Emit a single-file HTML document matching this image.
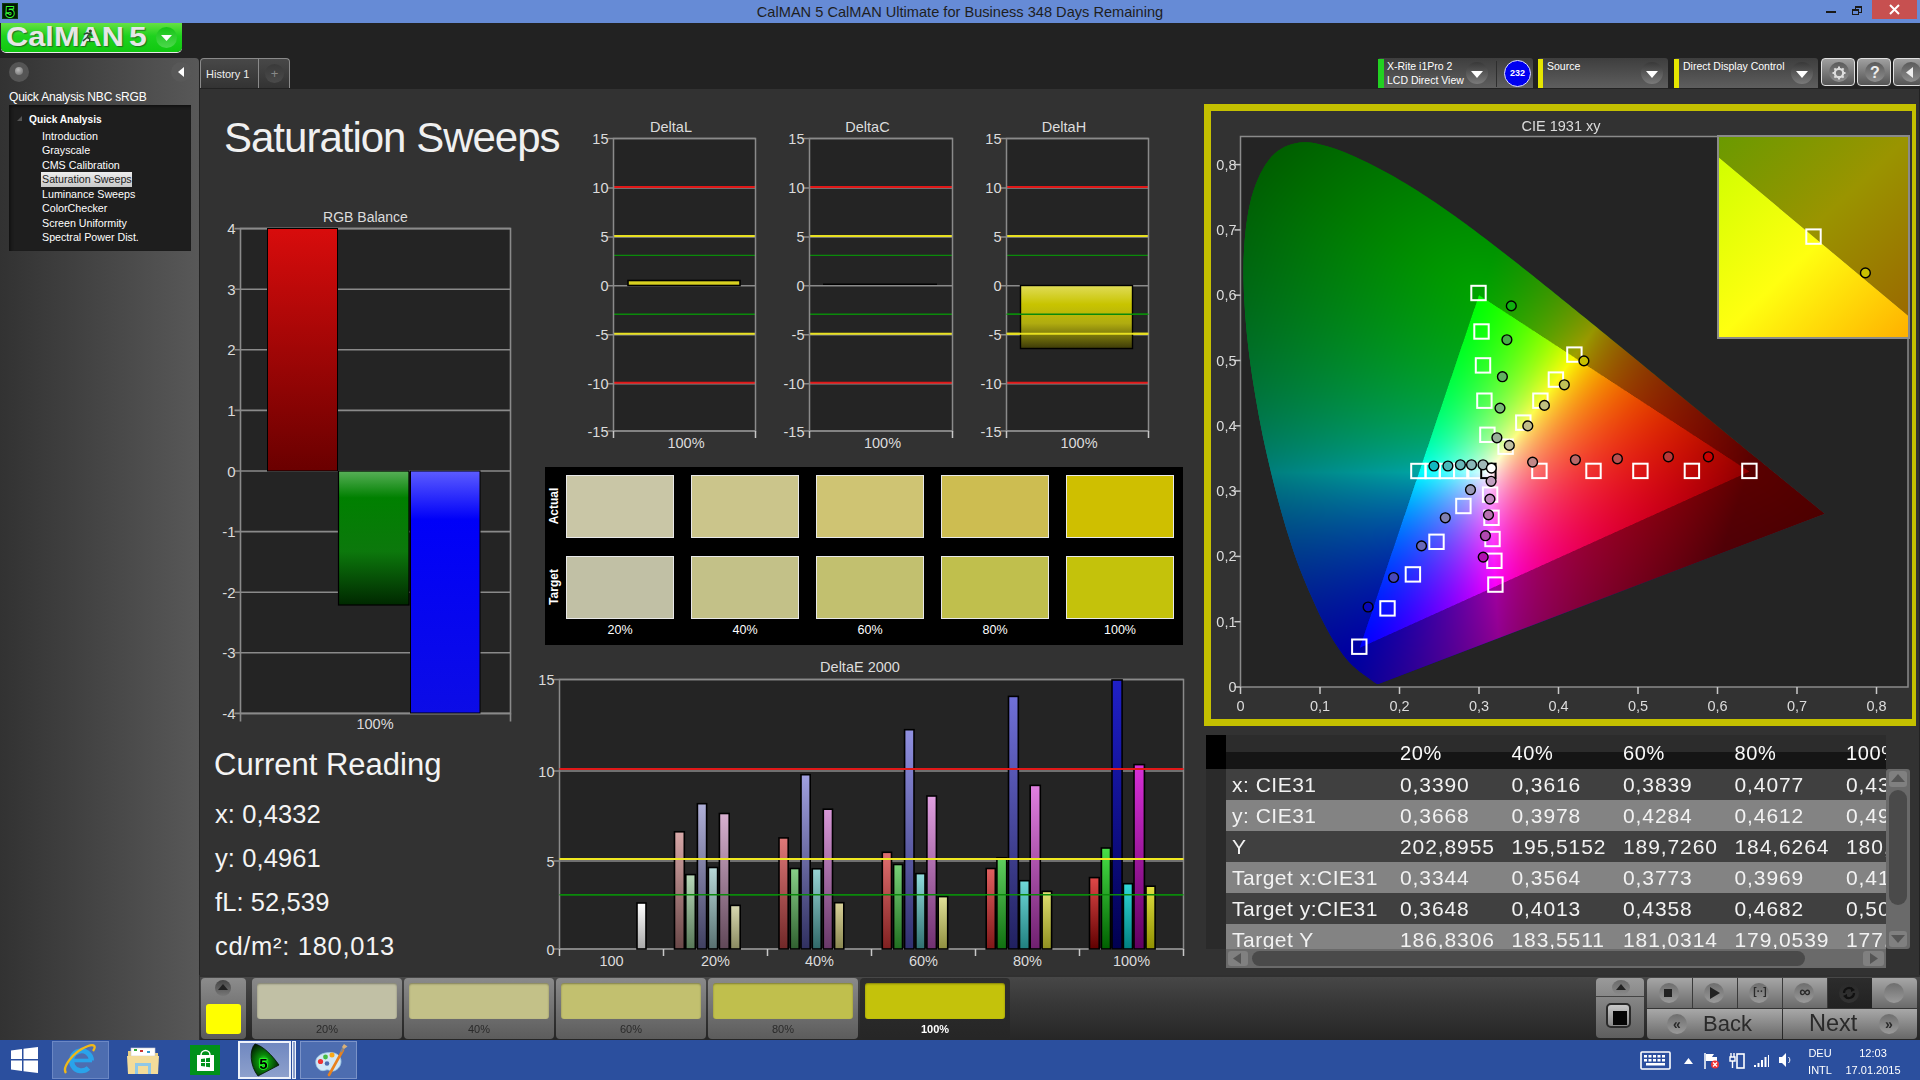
<!DOCTYPE html><html><head><meta charset="utf-8"><style>html,body{margin:0;padding:0;width:1920px;height:1080px;overflow:hidden;background:#222;font-family:"Liberation Sans",sans-serif}div{box-sizing:border-box}</style></head><body>
<div style="position:absolute;left:0;top:0;width:1920px;height:23px;background:#668bd6"></div>
<svg style="position:absolute;left:2px;top:3px" width="16" height="16" viewBox="0 0 16 16"><rect width="16" height="16" fill="#0b3a0b"/><rect x="1" y="1" width="14" height="14" fill="#041804"/><text x="8" y="14" font-family="Liberation Sans" font-weight="bold" font-size="15" fill="#000" stroke="#3f3" stroke-width="1.8" paint-order="stroke" text-anchor="middle">5</text></svg>
<div style="position:absolute;left:0;top:3px;width:1920px;text-align:center;font:14.6px 'Liberation Sans', sans-serif;color:#1e1e1e;line-height:18px">CalMAN 5 CalMAN Ultimate for Business 348 Days Remaining</div>
<div style="position:absolute;left:1826px;top:11px;width:10px;height:2px;background:#1a1a1a"></div>
<div style="position:absolute;left:1855px;top:6px;width:7px;height:7px;border:1px solid #1a1a1a;border-top-width:2px"></div>
<div style="position:absolute;left:1852px;top:9px;width:7px;height:6px;border:1px solid #1a1a1a;border-top-width:2px;background:#668bd6"></div>
<div style="position:absolute;left:1872px;top:0;width:45px;height:19px;background:#c75050"></div>
<svg style="position:absolute;left:1889px;top:4px" width="11" height="11"><path d="M1 1L10 10M10 1L1 10" stroke="#fff" stroke-width="2"/></svg>
<div style="position:absolute;left:0;top:23px;width:1920px;height:66px;background:#222222"></div>
<div style="position:absolute;left:1px;top:23px;width:181px;height:29px;border-radius:0 0 5px 5px;background:linear-gradient(#66e044,#1ed21e 45%,#10c810);box-shadow:0 1px 0 #e8e8e8"></div>
<div style="position:absolute;left:5.5px;top:19px;font:bold 28.5px 'Liberation Sans', sans-serif;color:#e6e6e6;transform:scaleX(1.08);transform-origin:0 0;text-shadow:1px 1px 1px #207020;line-height:34px;white-space:nowrap">CalMAN</div>
<div style="position:absolute;left:128.5px;top:19px;font:bold 28.5px 'Liberation Sans', sans-serif;color:#e6e6e6;transform:scaleX(1.12);transform-origin:0 0;text-shadow:1px 1px 1px #207020;line-height:34px">5</div>
<svg style="position:absolute;left:80.5px;top:28.5px" width="13" height="13" viewBox="0 0 14 14"><circle cx="10" cy="2.2" r="1.7" fill="#2e4a2e"/><path d="M3.5 5.5L6.5 4.3L9 5L11.5 7.2M8.8 4.8L6.5 9.2L2.5 12.5M6.5 9.2L9.5 10.5L9.2 13.5" stroke="#2e4a2e" stroke-width="1.6" fill="none" stroke-linecap="round" stroke-linejoin="round"/></svg>
<div style="position:absolute;left:156px;top:27px;width:21px;height:21px;border-radius:50%;background:linear-gradient(#16c416,#4cd84c)"></div>
<svg style="position:absolute;left:160px;top:34px" width="13" height="8"><path d="M1 1L12 1L6.5 7Z" fill="#fff"/></svg>
<div style="position:absolute;left:0;top:58px;width:199px;height:917px;border-radius:0 4px 0 0;background:linear-gradient(90deg,#323232,#585858)"></div>
<div style="position:absolute;left:0;top:975px;width:199px;height:65px;background:linear-gradient(90deg,#323232,#585858)"></div>
<div style="position:absolute;left:9px;top:62px;width:20px;height:20px;border-radius:50%;background:#555"></div>
<div style="position:absolute;left:15px;top:67px;width:8px;height:8px;border-radius:50%;background:radial-gradient(circle at 40% 35%,#bbb,#666)"></div>
<div style="position:absolute;left:171px;top:62px;width:20px;height:20px;border-radius:50%;background:#585858"></div>
<svg style="position:absolute;left:176px;top:66px" width="10" height="12"><path d="M8 1L8 11L2 6Z" fill="#fff"/></svg>
<div style="position:absolute;left:9px;top:89px;font:12px 'Liberation Sans', sans-serif;color:#fff;white-space:nowrap;letter-spacing:-0.2px;line-height:16px">Quick Analysis NBC sRGB</div>
<div style="position:absolute;left:9px;top:105px;width:182px;height:146px;background:#1e1e1e;box-shadow:inset 2px 2px 3px #111"></div>
<svg style="position:absolute;left:17px;top:116px" width="6" height="6"><path d="M5 0L5 5L0 5Z" fill="#555"/></svg>
<div style="position:absolute;left:29px;top:113px;font:bold 10.2px 'Liberation Sans', sans-serif;color:#fff;white-space:nowrap;line-height:14px">Quick Analysis</div>
<div style="position:absolute;left:42px;top:128.6px;font:10.7px 'Liberation Sans', sans-serif;color:#fff;white-space:nowrap;line-height:14px">Introduction</div>
<div style="position:absolute;left:42px;top:142.7px;font:10.7px 'Liberation Sans', sans-serif;color:#fff;white-space:nowrap;line-height:14px">Grayscale</div>
<div style="position:absolute;left:42px;top:157.6px;font:10.7px 'Liberation Sans', sans-serif;color:#fff;white-space:nowrap;line-height:14px">CMS Calibration</div>
<div style="position:absolute;left:41px;top:172px;width:91px;height:15px;background:linear-gradient(#eee,#c8c8c8)"></div>
<div style="position:absolute;left:42px;top:171.9px;font:10.7px 'Liberation Sans', sans-serif;color:#222;white-space:nowrap;line-height:14px">Saturation Sweeps</div>
<div style="position:absolute;left:42px;top:186.8px;font:10.7px 'Liberation Sans', sans-serif;color:#fff;white-space:nowrap;line-height:14px">Luminance Sweeps</div>
<div style="position:absolute;left:42px;top:201.3px;font:10.7px 'Liberation Sans', sans-serif;color:#fff;white-space:nowrap;line-height:14px">ColorChecker</div>
<div style="position:absolute;left:42px;top:215.5px;font:10.7px 'Liberation Sans', sans-serif;color:#fff;white-space:nowrap;line-height:14px">Screen Uniformity</div>
<div style="position:absolute;left:42px;top:230.4px;font:10.7px 'Liberation Sans', sans-serif;color:#fff;white-space:nowrap;line-height:14px">Spectral Power Dist.</div>
<div style="position:absolute;left:200px;top:58px;width:90px;height:30px;border:1px solid #8a8a8a;border-bottom:none;border-radius:4px 4px 0 0;background:linear-gradient(#484848,#333)"></div>
<div style="position:absolute;left:258px;top:59px;width:1px;height:29px;background:#8a8a8a"></div>
<div style="position:absolute;left:206px;top:66px;font:11px 'Liberation Sans', sans-serif;color:#eee;white-space:nowrap;line-height:16px">History 1</div>
<div style="position:absolute;left:265px;top:64px;width:19px;height:19px;border-radius:50%;background:linear-gradient(#3a3a3a,#4a4a4a)"></div>
<div style="position:absolute;left:265px;top:64px;width:19px;text-align:center;font:13px 'Liberation Sans', sans-serif;color:#888;line-height:20px">+</div>
<div style="position:absolute;left:200px;top:89px;width:1719px;height:886px;background:#323232"></div>
<div style="position:absolute;left:1378px;top:58px;width:155px;height:30px;border-radius:3px 3px 0 0;background:linear-gradient(#3e3e3e,#5e5e5e)"></div>
<div style="position:absolute;left:1378px;top:59px;width:6px;height:29px;background:#22d022"></div>
<div style="position:absolute;left:1387px;top:59px;font:10.5px 'Liberation Sans', sans-serif;color:#fff;line-height:14px;white-space:nowrap">X-Rite i1Pro 2<br>LCD Direct View</div>
<div style="position:absolute;left:1466px;top:62px;width:22px;height:22px;border-radius:50%;background:linear-gradient(#383838,#7a7a7a)"></div><svg style="position:absolute;left:1471px;top:71px" width="12" height="7"><path d="M0 0L12 0L6 7Z" fill="#fff"/></svg>
<div style="position:absolute;left:1496px;top:61px;width:1px;height:26px;background:#2e2e2e"></div>
<div style="position:absolute;left:1504px;top:60px;width:27px;height:27px;border-radius:50%;background:#0000f0;border:1.5px solid #e0e0ff"></div>
<div style="position:absolute;left:1504px;top:60px;width:27px;text-align:center;font:bold 9px 'Liberation Sans', sans-serif;color:#fff;line-height:27px">232</div>
<div style="position:absolute;left:1538px;top:58px;width:130px;height:30px;border-radius:3px 3px 0 0;background:linear-gradient(#3e3e3e,#5e5e5e)"></div>
<div style="position:absolute;left:1538px;top:59px;width:5px;height:29px;background:#e6e600"></div>
<div style="position:absolute;left:1547px;top:59px;font:10.5px 'Liberation Sans', sans-serif;color:#fff;line-height:14px;white-space:nowrap">Source</div>
<div style="position:absolute;left:1641px;top:62px;width:22px;height:22px;border-radius:50%;background:linear-gradient(#383838,#7a7a7a)"></div><svg style="position:absolute;left:1646px;top:71px" width="12" height="7"><path d="M0 0L12 0L6 7Z" fill="#fff"/></svg>
<div style="position:absolute;left:1674px;top:58px;width:144px;height:30px;border-radius:3px 3px 0 0;background:linear-gradient(#3e3e3e,#5e5e5e)"></div>
<div style="position:absolute;left:1674px;top:59px;width:5px;height:29px;background:#e6e600"></div>
<div style="position:absolute;left:1683px;top:59px;font:10.5px 'Liberation Sans', sans-serif;color:#fff;line-height:14px;white-space:nowrap">Direct Display Control</div>
<div style="position:absolute;left:1791px;top:62px;width:22px;height:22px;border-radius:50%;background:linear-gradient(#383838,#7a7a7a)"></div><svg style="position:absolute;left:1796px;top:71px" width="12" height="7"><path d="M0 0L12 0L6 7Z" fill="#fff"/></svg>
<div style="position:absolute;left:1821px;top:58px;width:34px;height:28px;border:1px solid #e0e0e0;border-radius:4px;background:linear-gradient(#a0a0a0,#545454)"></div>
<div style="position:absolute;left:1829px;top:62px;width:20px;height:20px;border-radius:50%;background:linear-gradient(#5a5a5a,#8e8e8e)"></div>
<svg style="position:absolute;left:1832px;top:66px" width="14" height="14" viewBox="0 0 14 14"><circle cx="7" cy="7" r="4.2" fill="none" stroke="#ddd" stroke-width="2.2"/><g stroke="#ddd" stroke-width="2"><path d="M7 0.5V3M7 11V13.5M0.5 7H3M11 7H13.5M2.4 2.4L4 4M10 10L11.6 11.6M2.4 11.6L4 10M10 4L11.6 2.4"/></g></svg>
<div style="position:absolute;left:1857px;top:58px;width:34px;height:28px;border:1px solid #e0e0e0;border-radius:4px;background:linear-gradient(#a0a0a0,#545454)"></div>
<div style="position:absolute;left:1865px;top:62px;width:20px;height:20px;border-radius:50%;background:linear-gradient(#5a5a5a,#8e8e8e)"></div>
<div style="position:absolute;left:1865px;top:61px;width:20px;text-align:center;font:bold 16px 'Liberation Sans', sans-serif;color:#eee;line-height:24px">?</div>
<div style="position:absolute;left:1893px;top:58px;width:30px;height:28px;border:1px solid #e0e0e0;border-radius:4px;background:linear-gradient(#a0a0a0,#545454)"></div>
<div style="position:absolute;left:1901px;top:62px;width:20px;height:20px;border-radius:50%;background:linear-gradient(#5a5a5a,#8e8e8e)"></div>
<svg style="position:absolute;left:1906px;top:67px" width="8" height="11"><path d="M7 0L7 11L0 5.5Z" fill="#eee"/></svg>
<div style="position:absolute;left:224px;top:113px;font:42px 'Liberation Sans', sans-serif;letter-spacing:-1px;color:#f0f0f0;white-space:nowrap;line-height:50px">Saturation Sweeps</div>
<div style="position:absolute;left:214px;top:745px;font:31px 'Liberation Sans', sans-serif;color:#f4f4f4;white-space:nowrap;line-height:40px">Current Reading</div>
<div style="position:absolute;left:215px;top:799px;font:25.5px 'Liberation Sans', sans-serif;letter-spacing:0.1px;color:#f4f4f4;white-space:nowrap;line-height:30px">x: 0,4332</div>
<div style="position:absolute;left:215px;top:843px;font:25.5px 'Liberation Sans', sans-serif;letter-spacing:0.1px;color:#f4f4f4;white-space:nowrap;line-height:30px">y: 0,4961</div>
<div style="position:absolute;left:215px;top:887px;font:25.5px 'Liberation Sans', sans-serif;letter-spacing:0.1px;color:#f4f4f4;white-space:nowrap;line-height:30px">fL: 52,539</div>
<div style="position:absolute;left:215px;top:931px;font:25.5px 'Liberation Sans', sans-serif;letter-spacing:0.7px;color:#f4f4f4;white-space:nowrap;line-height:30px">cd/m²: 180,013</div>
<svg style="position:absolute;left:0;top:0" width="1920" height="1080" font-family="Liberation Sans">
<defs>
<linearGradient id="gR" x1="0" y1="0" x2="0" y2="1"><stop offset="0" stop-color="#d80c0c"/><stop offset="1" stop-color="#6a0000"/></linearGradient>
<linearGradient id="gG" x1="0" y1="0" x2="0" y2="1"><stop offset="0" stop-color="#58b058"/><stop offset="0.2" stop-color="#008000"/><stop offset="0.6" stop-color="#0c780c"/><stop offset="1" stop-color="#002800"/></linearGradient>
<linearGradient id="gB" x1="0" y1="0" x2="0" y2="1"><stop offset="0" stop-color="#5c5cff"/><stop offset="0.2" stop-color="#0000f8"/><stop offset="1" stop-color="#0c0ce6"/></linearGradient>
<linearGradient id="gY" x1="0" y1="0" x2="0" y2="1"><stop offset="0" stop-color="#e0dc58"/><stop offset="0.3" stop-color="#c8c400"/><stop offset="0.6" stop-color="#b0ac10"/><stop offset="1" stop-color="#3c3a08"/></linearGradient>
</defs>
<rect x="240.5" y="228.5" width="270.0" height="485.0" fill="#242424"/>
<line x1="234.5" y1="228.6" x2="510.5" y2="228.6" stroke="#8a8a8a" stroke-width="1.6"/>
<text x="235.5" y="234.1" font-size="15" fill="#dcdcdc" text-anchor="end" font-weight="normal" >4</text>
<line x1="234.5" y1="289.2" x2="510.5" y2="289.2" stroke="#8a8a8a" stroke-width="1.6"/>
<text x="235.5" y="294.7" font-size="15" fill="#dcdcdc" text-anchor="end" font-weight="normal" >3</text>
<line x1="234.5" y1="349.8" x2="510.5" y2="349.8" stroke="#8a8a8a" stroke-width="1.6"/>
<text x="235.5" y="355.3" font-size="15" fill="#dcdcdc" text-anchor="end" font-weight="normal" >2</text>
<line x1="234.5" y1="410.4" x2="510.5" y2="410.4" stroke="#8a8a8a" stroke-width="1.6"/>
<text x="235.5" y="415.9" font-size="15" fill="#dcdcdc" text-anchor="end" font-weight="normal" >1</text>
<line x1="234.5" y1="471.0" x2="510.5" y2="471.0" stroke="#8a8a8a" stroke-width="1.6"/>
<text x="235.5" y="476.5" font-size="15" fill="#dcdcdc" text-anchor="end" font-weight="normal" >0</text>
<line x1="234.5" y1="531.6" x2="510.5" y2="531.6" stroke="#8a8a8a" stroke-width="1.6"/>
<text x="235.5" y="537.1" font-size="15" fill="#dcdcdc" text-anchor="end" font-weight="normal" >-1</text>
<line x1="234.5" y1="592.2" x2="510.5" y2="592.2" stroke="#8a8a8a" stroke-width="1.6"/>
<text x="235.5" y="597.7" font-size="15" fill="#dcdcdc" text-anchor="end" font-weight="normal" >-2</text>
<line x1="234.5" y1="652.8" x2="510.5" y2="652.8" stroke="#8a8a8a" stroke-width="1.6"/>
<text x="235.5" y="658.3" font-size="15" fill="#dcdcdc" text-anchor="end" font-weight="normal" >-3</text>
<line x1="234.5" y1="713.4" x2="510.5" y2="713.4" stroke="#8a8a8a" stroke-width="1.6"/>
<text x="235.5" y="718.9" font-size="15" fill="#dcdcdc" text-anchor="end" font-weight="normal" >-4</text>
<rect x="240.5" y="228.5" width="270.0" height="485.0" fill="none" stroke="#8a8a8a" stroke-width="1.6"/>
<line x1="240.5" y1="713.5" x2="240.5" y2="721.5" stroke="#8a8a8a" stroke-width="1.6"/>
<line x1="510.5" y1="713.5" x2="510.5" y2="721.5" stroke="#8a8a8a" stroke-width="1.6"/>
<rect x="267.5" y="228.5" width="70" height="242.5" fill="url(#gR)" stroke="#000" stroke-width="1"/>
<rect x="338.5" y="471" width="70.5" height="134" fill="url(#gG)" stroke="#000" stroke-width="1.2"/>
<rect x="410.5" y="471" width="69.5" height="242" fill="url(#gB)" stroke="#000" stroke-width="1"/>
<text x="375.0" y="729.0" font-size="14.5" fill="#dcdcdc" text-anchor="middle" font-weight="normal" >100%</text>
<text x="365.5" y="221.5" font-size="14" fill="#dcdcdc" text-anchor="middle" font-weight="normal" >RGB Balance</text>
<rect x="613.5" y="138.5" width="142.0" height="292.5" fill="#242424"/>
<line x1="607.5" y1="138.5" x2="755.5" y2="138.5" stroke="#8a8a8a" stroke-width="1.5"/>
<text x="608.5" y="144.0" font-size="14.5" fill="#dcdcdc" text-anchor="end" font-weight="normal" >15</text>
<line x1="607.5" y1="187.9" x2="755.5" y2="187.9" stroke="#8a8a8a" stroke-width="1.5"/>
<text x="608.5" y="193.4" font-size="14.5" fill="#dcdcdc" text-anchor="end" font-weight="normal" >10</text>
<line x1="607.5" y1="236.9" x2="755.5" y2="236.9" stroke="#8a8a8a" stroke-width="1.5"/>
<text x="608.5" y="242.4" font-size="14.5" fill="#dcdcdc" text-anchor="end" font-weight="normal" >5</text>
<line x1="607.5" y1="285.8" x2="755.5" y2="285.8" stroke="#8a8a8a" stroke-width="1.5"/>
<text x="608.5" y="291.3" font-size="14.5" fill="#dcdcdc" text-anchor="end" font-weight="normal" >0</text>
<line x1="607.5" y1="334.8" x2="755.5" y2="334.8" stroke="#8a8a8a" stroke-width="1.5"/>
<text x="608.5" y="340.2" font-size="14.5" fill="#dcdcdc" text-anchor="end" font-weight="normal" >-5</text>
<line x1="607.5" y1="383.7" x2="755.5" y2="383.7" stroke="#8a8a8a" stroke-width="1.5"/>
<text x="608.5" y="389.2" font-size="14.5" fill="#dcdcdc" text-anchor="end" font-weight="normal" >-10</text>
<line x1="607.5" y1="431.0" x2="755.5" y2="431.0" stroke="#8a8a8a" stroke-width="1.5"/>
<text x="608.5" y="436.5" font-size="14.5" fill="#dcdcdc" text-anchor="end" font-weight="normal" >-15</text>
<line x1="613.5" y1="186.9" x2="755.5" y2="186.9" stroke="#e01818" stroke-width="2"/>
<line x1="613.5" y1="235.9" x2="755.5" y2="235.9" stroke="#e8e020" stroke-width="2"/>
<line x1="613.5" y1="255.4" x2="755.5" y2="255.4" stroke="#0a8a0a" stroke-width="1.4"/>
<line x1="613.5" y1="314.2" x2="755.5" y2="314.2" stroke="#0a8a0a" stroke-width="1.4"/>
<line x1="613.5" y1="333.8" x2="755.5" y2="333.8" stroke="#e8e020" stroke-width="2"/>
<line x1="613.5" y1="382.7" x2="755.5" y2="382.7" stroke="#e01818" stroke-width="2"/>
<rect x="613.5" y="138.5" width="142.0" height="292.5" fill="none" stroke="#8a8a8a" stroke-width="1.5"/>
<line x1="613.5" y1="431.0" x2="613.5" y2="438.0" stroke="#c8c8c8" stroke-width="1.5"/>
<line x1="755.5" y1="431.0" x2="755.5" y2="438.0" stroke="#c8c8c8" stroke-width="1.5"/>
<text x="671.0" y="132.0" font-size="14.5" fill="#dcdcdc" text-anchor="middle" font-weight="normal" >DeltaL</text>
<text x="686.0" y="448.0" font-size="14.5" fill="#dcdcdc" text-anchor="middle" font-weight="normal" >100%</text>
<rect x="809.5" y="138.5" width="143.0" height="292.5" fill="#242424"/>
<line x1="803.5" y1="138.5" x2="952.5" y2="138.5" stroke="#8a8a8a" stroke-width="1.5"/>
<text x="804.5" y="144.0" font-size="14.5" fill="#dcdcdc" text-anchor="end" font-weight="normal" >15</text>
<line x1="803.5" y1="187.9" x2="952.5" y2="187.9" stroke="#8a8a8a" stroke-width="1.5"/>
<text x="804.5" y="193.4" font-size="14.5" fill="#dcdcdc" text-anchor="end" font-weight="normal" >10</text>
<line x1="803.5" y1="236.9" x2="952.5" y2="236.9" stroke="#8a8a8a" stroke-width="1.5"/>
<text x="804.5" y="242.4" font-size="14.5" fill="#dcdcdc" text-anchor="end" font-weight="normal" >5</text>
<line x1="803.5" y1="285.8" x2="952.5" y2="285.8" stroke="#8a8a8a" stroke-width="1.5"/>
<text x="804.5" y="291.3" font-size="14.5" fill="#dcdcdc" text-anchor="end" font-weight="normal" >0</text>
<line x1="803.5" y1="334.8" x2="952.5" y2="334.8" stroke="#8a8a8a" stroke-width="1.5"/>
<text x="804.5" y="340.2" font-size="14.5" fill="#dcdcdc" text-anchor="end" font-weight="normal" >-5</text>
<line x1="803.5" y1="383.7" x2="952.5" y2="383.7" stroke="#8a8a8a" stroke-width="1.5"/>
<text x="804.5" y="389.2" font-size="14.5" fill="#dcdcdc" text-anchor="end" font-weight="normal" >-10</text>
<line x1="803.5" y1="431.0" x2="952.5" y2="431.0" stroke="#8a8a8a" stroke-width="1.5"/>
<text x="804.5" y="436.5" font-size="14.5" fill="#dcdcdc" text-anchor="end" font-weight="normal" >-15</text>
<line x1="809.5" y1="186.9" x2="952.5" y2="186.9" stroke="#e01818" stroke-width="2"/>
<line x1="809.5" y1="235.9" x2="952.5" y2="235.9" stroke="#e8e020" stroke-width="2"/>
<line x1="809.5" y1="255.4" x2="952.5" y2="255.4" stroke="#0a8a0a" stroke-width="1.4"/>
<line x1="809.5" y1="314.2" x2="952.5" y2="314.2" stroke="#0a8a0a" stroke-width="1.4"/>
<line x1="809.5" y1="333.8" x2="952.5" y2="333.8" stroke="#e8e020" stroke-width="2"/>
<line x1="809.5" y1="382.7" x2="952.5" y2="382.7" stroke="#e01818" stroke-width="2"/>
<rect x="809.5" y="138.5" width="143.0" height="292.5" fill="none" stroke="#8a8a8a" stroke-width="1.5"/>
<line x1="809.5" y1="431.0" x2="809.5" y2="438.0" stroke="#c8c8c8" stroke-width="1.5"/>
<line x1="952.5" y1="431.0" x2="952.5" y2="438.0" stroke="#c8c8c8" stroke-width="1.5"/>
<text x="867.5" y="132.0" font-size="14.5" fill="#dcdcdc" text-anchor="middle" font-weight="normal" >DeltaC</text>
<text x="882.5" y="448.0" font-size="14.5" fill="#dcdcdc" text-anchor="middle" font-weight="normal" >100%</text>
<rect x="1006.5" y="138.5" width="142.0" height="292.5" fill="#242424"/>
<line x1="1000.5" y1="138.5" x2="1148.5" y2="138.5" stroke="#8a8a8a" stroke-width="1.5"/>
<text x="1001.5" y="144.0" font-size="14.5" fill="#dcdcdc" text-anchor="end" font-weight="normal" >15</text>
<line x1="1000.5" y1="187.9" x2="1148.5" y2="187.9" stroke="#8a8a8a" stroke-width="1.5"/>
<text x="1001.5" y="193.4" font-size="14.5" fill="#dcdcdc" text-anchor="end" font-weight="normal" >10</text>
<line x1="1000.5" y1="236.9" x2="1148.5" y2="236.9" stroke="#8a8a8a" stroke-width="1.5"/>
<text x="1001.5" y="242.4" font-size="14.5" fill="#dcdcdc" text-anchor="end" font-weight="normal" >5</text>
<line x1="1000.5" y1="285.8" x2="1148.5" y2="285.8" stroke="#8a8a8a" stroke-width="1.5"/>
<text x="1001.5" y="291.3" font-size="14.5" fill="#dcdcdc" text-anchor="end" font-weight="normal" >0</text>
<line x1="1000.5" y1="334.8" x2="1148.5" y2="334.8" stroke="#8a8a8a" stroke-width="1.5"/>
<text x="1001.5" y="340.2" font-size="14.5" fill="#dcdcdc" text-anchor="end" font-weight="normal" >-5</text>
<line x1="1000.5" y1="383.7" x2="1148.5" y2="383.7" stroke="#8a8a8a" stroke-width="1.5"/>
<text x="1001.5" y="389.2" font-size="14.5" fill="#dcdcdc" text-anchor="end" font-weight="normal" >-10</text>
<line x1="1000.5" y1="431.0" x2="1148.5" y2="431.0" stroke="#8a8a8a" stroke-width="1.5"/>
<text x="1001.5" y="436.5" font-size="14.5" fill="#dcdcdc" text-anchor="end" font-weight="normal" >-15</text>
<line x1="1006.5" y1="186.9" x2="1148.5" y2="186.9" stroke="#e01818" stroke-width="2"/>
<line x1="1006.5" y1="235.9" x2="1148.5" y2="235.9" stroke="#e8e020" stroke-width="2"/>
<line x1="1006.5" y1="255.4" x2="1148.5" y2="255.4" stroke="#0a8a0a" stroke-width="1.4"/>
<line x1="1006.5" y1="314.2" x2="1148.5" y2="314.2" stroke="#0a8a0a" stroke-width="1.4"/>
<line x1="1006.5" y1="333.8" x2="1148.5" y2="333.8" stroke="#e8e020" stroke-width="2"/>
<line x1="1006.5" y1="382.7" x2="1148.5" y2="382.7" stroke="#e01818" stroke-width="2"/>
<rect x="1006.5" y="138.5" width="142.0" height="292.5" fill="none" stroke="#8a8a8a" stroke-width="1.5"/>
<line x1="1006.5" y1="431.0" x2="1006.5" y2="438.0" stroke="#c8c8c8" stroke-width="1.5"/>
<line x1="1148.5" y1="431.0" x2="1148.5" y2="438.0" stroke="#c8c8c8" stroke-width="1.5"/>
<text x="1064.0" y="132.0" font-size="14.5" fill="#dcdcdc" text-anchor="middle" font-weight="normal" >DeltaH</text>
<text x="1079.0" y="448.0" font-size="14.5" fill="#dcdcdc" text-anchor="middle" font-weight="normal" >100%</text>
<rect x="628" y="280.5" width="112" height="5" fill="#d8d020" stroke="#000" stroke-width="1.6"/>
<line x1="823" y1="284.2" x2="937" y2="284.2" stroke="#000" stroke-width="1.4"/>
<rect x="1020.5" y="285.5" width="112" height="63" fill="url(#gY)" stroke="#000" stroke-width="1.4"/>
<line x1="1006.5" y1="314.2" x2="1148.5" y2="314.2" stroke="#0a8a0a" stroke-width="1.4"/>
<line x1="1006.5" y1="333.8" x2="1148.5" y2="333.8" stroke="#e8e020" stroke-width="2"/>
</svg>
<div style="position:absolute;left:545px;top:467px;width:638px;height:178px;background:#000"></div>
<div style="position:absolute;left:566px;top:475px;width:108px;height:63px;background:#c9c6a6;border:1px solid #e8e8e8"></div>
<div style="position:absolute;left:566px;top:556px;width:108px;height:63px;background:#c1c0a5;border:1px solid #e8e8e8"></div>
<div style="position:absolute;left:566px;top:622px;width:108px;text-align:center;font:12.5px 'Liberation Sans', sans-serif;color:#fff;line-height:16px">20%</div>
<div style="position:absolute;left:691px;top:475px;width:108px;height:63px;background:#cbc58b;border:1px solid #e8e8e8"></div>
<div style="position:absolute;left:691px;top:556px;width:108px;height:63px;background:#c3c188;border:1px solid #e8e8e8"></div>
<div style="position:absolute;left:691px;top:622px;width:108px;text-align:center;font:12.5px 'Liberation Sans', sans-serif;color:#fff;line-height:16px">40%</div>
<div style="position:absolute;left:816px;top:475px;width:108px;height:63px;background:#cfc473;border:1px solid #e8e8e8"></div>
<div style="position:absolute;left:816px;top:556px;width:108px;height:63px;background:#c2c06f;border:1px solid #e8e8e8"></div>
<div style="position:absolute;left:816px;top:622px;width:108px;text-align:center;font:12.5px 'Liberation Sans', sans-serif;color:#fff;line-height:16px">60%</div>
<div style="position:absolute;left:941px;top:475px;width:108px;height:63px;background:#cdbd51;border:1px solid #e8e8e8"></div>
<div style="position:absolute;left:941px;top:556px;width:108px;height:63px;background:#c0bf4d;border:1px solid #e8e8e8"></div>
<div style="position:absolute;left:941px;top:622px;width:108px;text-align:center;font:12.5px 'Liberation Sans', sans-serif;color:#fff;line-height:16px">80%</div>
<div style="position:absolute;left:1066px;top:475px;width:108px;height:63px;background:#cfbf00;border:1px solid #e8e8e8"></div>
<div style="position:absolute;left:1066px;top:556px;width:108px;height:63px;background:#c4c20b;border:1px solid #e8e8e8"></div>
<div style="position:absolute;left:1066px;top:622px;width:108px;text-align:center;font:12.5px 'Liberation Sans', sans-serif;color:#fff;line-height:16px">100%</div>
<div style="position:absolute;left:524px;top:498px;width:60px;height:16px;transform:rotate(-90deg);text-align:center;font:bold 12px 'Liberation Sans', sans-serif;color:#fff;line-height:16px">Actual</div>
<div style="position:absolute;left:524px;top:579px;width:60px;height:16px;transform:rotate(-90deg);text-align:center;font:bold 12px 'Liberation Sans', sans-serif;color:#fff;line-height:16px">Target</div>
<svg style="position:absolute;left:0;top:0" width="1920" height="1080" font-family="Liberation Sans">
<defs><linearGradient id="de0" x1="0" y1="0" x2="0" y2="1"><stop offset="0" stop-color="#ffffff"/><stop offset="1" stop-color="#a8a8a8"/></linearGradient><linearGradient id="de1" x1="0" y1="0" x2="0" y2="1"><stop offset="0" stop-color="#d8a8a8"/><stop offset="1" stop-color="#6a4848"/></linearGradient><linearGradient id="de2" x1="0" y1="0" x2="0" y2="1"><stop offset="0" stop-color="#b8d8b8"/><stop offset="1" stop-color="#587858"/></linearGradient><linearGradient id="de3" x1="0" y1="0" x2="0" y2="1"><stop offset="0" stop-color="#b0b0d8"/><stop offset="1" stop-color="#404060"/></linearGradient><linearGradient id="de4" x1="0" y1="0" x2="0" y2="1"><stop offset="0" stop-color="#b8d8d8"/><stop offset="1" stop-color="#587070"/></linearGradient><linearGradient id="de5" x1="0" y1="0" x2="0" y2="1"><stop offset="0" stop-color="#d8b0d0"/><stop offset="1" stop-color="#604858"/></linearGradient><linearGradient id="de6" x1="0" y1="0" x2="0" y2="1"><stop offset="0" stop-color="#d8d8b0"/><stop offset="1" stop-color="#8a8a60"/></linearGradient><linearGradient id="de7" x1="0" y1="0" x2="0" y2="1"><stop offset="0" stop-color="#e07878"/><stop offset="1" stop-color="#702828"/></linearGradient><linearGradient id="de8" x1="0" y1="0" x2="0" y2="1"><stop offset="0" stop-color="#88d088"/><stop offset="1" stop-color="#306030"/></linearGradient><linearGradient id="de9" x1="0" y1="0" x2="0" y2="1"><stop offset="0" stop-color="#a0a0e0"/><stop offset="1" stop-color="#303060"/></linearGradient><linearGradient id="de10" x1="0" y1="0" x2="0" y2="1"><stop offset="0" stop-color="#98d4d4"/><stop offset="1" stop-color="#306868"/></linearGradient><linearGradient id="de11" x1="0" y1="0" x2="0" y2="1"><stop offset="0" stop-color="#d898d8"/><stop offset="1" stop-color="#683868"/></linearGradient><linearGradient id="de12" x1="0" y1="0" x2="0" y2="1"><stop offset="0" stop-color="#d8d098"/><stop offset="1" stop-color="#8a8850"/></linearGradient><linearGradient id="de13" x1="0" y1="0" x2="0" y2="1"><stop offset="0" stop-color="#e07070"/><stop offset="1" stop-color="#802020"/></linearGradient><linearGradient id="de14" x1="0" y1="0" x2="0" y2="1"><stop offset="0" stop-color="#78d078"/><stop offset="1" stop-color="#207020"/></linearGradient><linearGradient id="de15" x1="0" y1="0" x2="0" y2="1"><stop offset="0" stop-color="#9090e0"/><stop offset="1" stop-color="#303070"/></linearGradient><linearGradient id="de16" x1="0" y1="0" x2="0" y2="1"><stop offset="0" stop-color="#90dcdc"/><stop offset="1" stop-color="#307070"/></linearGradient><linearGradient id="de17" x1="0" y1="0" x2="0" y2="1"><stop offset="0" stop-color="#e0a0e0"/><stop offset="1" stop-color="#703070"/></linearGradient><linearGradient id="de18" x1="0" y1="0" x2="0" y2="1"><stop offset="0" stop-color="#e0e098"/><stop offset="1" stop-color="#909040"/></linearGradient><linearGradient id="de19" x1="0" y1="0" x2="0" y2="1"><stop offset="0" stop-color="#e06060"/><stop offset="1" stop-color="#801818"/></linearGradient><linearGradient id="de20" x1="0" y1="0" x2="0" y2="1"><stop offset="0" stop-color="#60d060"/><stop offset="1" stop-color="#107010"/></linearGradient><linearGradient id="de21" x1="0" y1="0" x2="0" y2="1"><stop offset="0" stop-color="#7070d8"/><stop offset="1" stop-color="#202060"/></linearGradient><linearGradient id="de22" x1="0" y1="0" x2="0" y2="1"><stop offset="0" stop-color="#70d8d8"/><stop offset="1" stop-color="#208080"/></linearGradient><linearGradient id="de23" x1="0" y1="0" x2="0" y2="1"><stop offset="0" stop-color="#e080e0"/><stop offset="1" stop-color="#702070"/></linearGradient><linearGradient id="de24" x1="0" y1="0" x2="0" y2="1"><stop offset="0" stop-color="#e0e070"/><stop offset="1" stop-color="#909020"/></linearGradient><linearGradient id="de25" x1="0" y1="0" x2="0" y2="1"><stop offset="0" stop-color="#e04848"/><stop offset="1" stop-color="#600000"/></linearGradient><linearGradient id="de26" x1="0" y1="0" x2="0" y2="1"><stop offset="0" stop-color="#48e048"/><stop offset="1" stop-color="#006000"/></linearGradient><linearGradient id="de27" x1="0" y1="0" x2="0" y2="1"><stop offset="0" stop-color="#2020c8"/><stop offset="1" stop-color="#000050"/></linearGradient><linearGradient id="de28" x1="0" y1="0" x2="0" y2="1"><stop offset="0" stop-color="#30d8d8"/><stop offset="1" stop-color="#008080"/></linearGradient><linearGradient id="de29" x1="0" y1="0" x2="0" y2="1"><stop offset="0" stop-color="#d830d8"/><stop offset="1" stop-color="#600060"/></linearGradient><linearGradient id="de30" x1="0" y1="0" x2="0" y2="1"><stop offset="0" stop-color="#e0e040"/><stop offset="1" stop-color="#909000"/></linearGradient></defs>
<rect x="559.5" y="679.5" width="624.0" height="269.5" fill="#242424"/>
<line x1="553.5" y1="679.5" x2="1183.5" y2="679.5" stroke="#8a8a8a" stroke-width="1.5"/>
<text x="554.5" y="685.0" font-size="14.5" fill="#dcdcdc" text-anchor="end" font-weight="normal" >15</text>
<line x1="553.5" y1="771.1" x2="1183.5" y2="771.1" stroke="#8a8a8a" stroke-width="1.5"/>
<text x="554.5" y="776.6" font-size="14.5" fill="#dcdcdc" text-anchor="end" font-weight="normal" >10</text>
<line x1="553.5" y1="861.0" x2="1183.5" y2="861.0" stroke="#8a8a8a" stroke-width="1.5"/>
<text x="554.5" y="866.5" font-size="14.5" fill="#dcdcdc" text-anchor="end" font-weight="normal" >5</text>
<line x1="553.5" y1="949.0" x2="1183.5" y2="949.0" stroke="#8a8a8a" stroke-width="1.5"/>
<text x="554.5" y="954.5" font-size="14.5" fill="#dcdcdc" text-anchor="end" font-weight="normal" >0</text>
<line x1="559.5" y1="769.0" x2="1183.5" y2="769.0" stroke="#e01818" stroke-width="2"/>
<line x1="559.5" y1="858.9" x2="1183.5" y2="858.9" stroke="#f0e820" stroke-width="2"/>
<line x1="559.5" y1="894.8" x2="1183.5" y2="894.8" stroke="#0a8a0a" stroke-width="1.5"/>
<rect x="559.5" y="679.5" width="624.0" height="269.5" fill="none" stroke="#8a8a8a" stroke-width="1.5"/>
<line x1="559.5" y1="949.0" x2="559.5" y2="956.0" stroke="#c8c8c8" stroke-width="1.5"/>
<line x1="663.5" y1="949.0" x2="663.5" y2="956.0" stroke="#c8c8c8" stroke-width="1.5"/>
<line x1="767.5" y1="949.0" x2="767.5" y2="956.0" stroke="#c8c8c8" stroke-width="1.5"/>
<line x1="871.5" y1="949.0" x2="871.5" y2="956.0" stroke="#c8c8c8" stroke-width="1.5"/>
<line x1="975.5" y1="949.0" x2="975.5" y2="956.0" stroke="#c8c8c8" stroke-width="1.5"/>
<line x1="1079.5" y1="949.0" x2="1079.5" y2="956.0" stroke="#c8c8c8" stroke-width="1.5"/>
<line x1="1183.5" y1="949.0" x2="1183.5" y2="956.0" stroke="#c8c8c8" stroke-width="1.5"/>
<text x="611.5" y="966.0" font-size="14.5" fill="#dcdcdc" text-anchor="middle" font-weight="normal" >100</text>
<text x="715.5" y="966.0" font-size="14.5" fill="#dcdcdc" text-anchor="middle" font-weight="normal" >20%</text>
<text x="819.5" y="966.0" font-size="14.5" fill="#dcdcdc" text-anchor="middle" font-weight="normal" >40%</text>
<text x="923.5" y="966.0" font-size="14.5" fill="#dcdcdc" text-anchor="middle" font-weight="normal" >60%</text>
<text x="1027.5" y="966.0" font-size="14.5" fill="#dcdcdc" text-anchor="middle" font-weight="normal" >80%</text>
<text x="1131.5" y="966.0" font-size="14.5" fill="#dcdcdc" text-anchor="middle" font-weight="normal" >100%</text>
<text x="860.0" y="672.0" font-size="14.5" fill="#dcdcdc" text-anchor="middle" font-weight="normal" >DeltaE 2000</text>
<rect x="637.0" y="903.0" width="9.0" height="46.0" fill="url(#de0)" stroke="#000" stroke-width="1.6"/>
<rect x="674.5" y="831.8" width="9.8" height="117.2" fill="url(#de1)" stroke="#000" stroke-width="1.6"/>
<rect x="685.8" y="874.6" width="9.5" height="74.4" fill="url(#de2)" stroke="#000" stroke-width="1.6"/>
<rect x="697.4" y="803.7" width="9.2" height="145.3" fill="url(#de3)" stroke="#000" stroke-width="1.6"/>
<rect x="708.4" y="867.5" width="9.2" height="81.5" fill="url(#de4)" stroke="#000" stroke-width="1.6"/>
<rect x="719.4" y="813.5" width="9.8" height="135.5" fill="url(#de5)" stroke="#000" stroke-width="1.6"/>
<rect x="730.4" y="905.4" width="9.8" height="43.6" fill="url(#de6)" stroke="#000" stroke-width="1.6"/>
<rect x="779.0" y="837.9" width="9.2" height="111.1" fill="url(#de7)" stroke="#000" stroke-width="1.6"/>
<rect x="790.3" y="868.5" width="8.9" height="80.5" fill="url(#de8)" stroke="#000" stroke-width="1.6"/>
<rect x="801.0" y="774.7" width="9.2" height="174.3" fill="url(#de9)" stroke="#000" stroke-width="1.6"/>
<rect x="812.3" y="868.8" width="8.9" height="80.2" fill="url(#de10)" stroke="#000" stroke-width="1.6"/>
<rect x="823.3" y="809.2" width="9.2" height="139.8" fill="url(#de11)" stroke="#000" stroke-width="1.6"/>
<rect x="834.6" y="902.7" width="9.2" height="46.3" fill="url(#de12)" stroke="#000" stroke-width="1.6"/>
<rect x="882.3" y="852.3" width="9.2" height="96.7" fill="url(#de13)" stroke="#000" stroke-width="1.6"/>
<rect x="893.6" y="864.5" width="8.9" height="84.5" fill="url(#de14)" stroke="#000" stroke-width="1.6"/>
<rect x="904.6" y="729.7" width="9.4" height="219.3" fill="url(#de15)" stroke="#000" stroke-width="1.6"/>
<rect x="915.9" y="873.6" width="9.1" height="75.4" fill="url(#de16)" stroke="#000" stroke-width="1.6"/>
<rect x="926.9" y="796.0" width="9.5" height="153.0" fill="url(#de17)" stroke="#000" stroke-width="1.6"/>
<rect x="938.2" y="896.6" width="9.5" height="52.4" fill="url(#de18)" stroke="#000" stroke-width="1.6"/>
<rect x="986.2" y="868.5" width="9.1" height="80.5" fill="url(#de19)" stroke="#000" stroke-width="1.6"/>
<rect x="996.9" y="857.8" width="9.8" height="91.2" fill="url(#de20)" stroke="#000" stroke-width="1.6"/>
<rect x="1008.5" y="696.4" width="9.8" height="252.6" fill="url(#de21)" stroke="#000" stroke-width="1.6"/>
<rect x="1019.5" y="880.7" width="9.8" height="68.3" fill="url(#de22)" stroke="#000" stroke-width="1.6"/>
<rect x="1030.2" y="785.4" width="10.1" height="163.6" fill="url(#de23)" stroke="#000" stroke-width="1.6"/>
<rect x="1042.1" y="891.4" width="9.5" height="57.6" fill="url(#de24)" stroke="#000" stroke-width="1.6"/>
<rect x="1089.5" y="877.6" width="9.7" height="71.4" fill="url(#de25)" stroke="#000" stroke-width="1.6"/>
<rect x="1101.4" y="848.0" width="9.1" height="101.0" fill="url(#de26)" stroke="#000" stroke-width="1.6"/>
<rect x="1112.0" y="680.0" width="10.1" height="269.0" fill="url(#de27)" stroke="#000" stroke-width="1.6"/>
<rect x="1123.4" y="883.7" width="9.1" height="65.3" fill="url(#de28)" stroke="#000" stroke-width="1.6"/>
<rect x="1134.0" y="764.6" width="10.4" height="184.4" fill="url(#de29)" stroke="#000" stroke-width="1.6"/>
<rect x="1146.0" y="886.2" width="9.1" height="62.8" fill="url(#de30)" stroke="#000" stroke-width="1.6"/>
<line x1="559.5" y1="769.0" x2="1183.5" y2="769.0" stroke="#e01818" stroke-width="2"/>
<line x1="559.5" y1="858.9" x2="1183.5" y2="858.9" stroke="#f0e820" stroke-width="2"/>
<line x1="559.5" y1="894.8" x2="1183.5" y2="894.8" stroke="#0a8a0a" stroke-width="1.5"/>
</svg>
<div style="position:absolute;left:1204px;top:104px;width:712px;height:622px;border:7px solid #c4c000;border-right-width:4px;background:#323232;box-sizing:border-box"></div>
<div style="position:absolute;left:1241px;top:137px;width:667px;height:550px;background:#242424"></div>
<svg style="position:absolute;left:0;top:0" width="1920" height="1080"><defs><linearGradient id="fbl" x1="0" y1="0" x2="0" y2="1"><stop offset="0" stop-color="#006400"/><stop offset="0.45" stop-color="#008c30"/><stop offset="0.62" stop-color="#008a8a"/><stop offset="0.8" stop-color="#00408c"/><stop offset="1" stop-color="#0000a0"/></linearGradient><linearGradient id="fbr" x1="0" y1="0" x2="1" y2="0"><stop offset="0" stop-color="#000000" stop-opacity="0"/><stop offset="0.5" stop-color="#000" stop-opacity="0"/><stop offset="1" stop-color="#600000" stop-opacity="1"/></linearGradient><radialGradient id="fbw" cx="1489.1" cy="472.2" r="90" gradientUnits="userSpaceOnUse"><stop offset="0" stop-color="#fff"/><stop offset="1" stop-color="#fff" stop-opacity="0"/></radialGradient><linearGradient id="fby" gradientUnits="userSpaceOnUse" x1="1479.0" y1="295.2" x2="1749.3" y2="471.5"><stop offset="0" stop-color="#00ff00"/><stop offset="0.5" stop-color="#ffff00"/><stop offset="1" stop-color="#b00000"/></linearGradient><linearGradient id="fbc" gradientUnits="userSpaceOnUse" x1="1479.0" y1="295.2" x2="1359.8" y2="647.8"><stop offset="0" stop-color="#00ff00"/><stop offset="0.5" stop-color="#00ffff"/><stop offset="1" stop-color="#0000ff"/></linearGradient><linearGradient id="fbm" gradientUnits="userSpaceOnUse" x1="1359.8" y1="647.8" x2="1749.3" y2="471.5"><stop offset="0" stop-color="#0000ff"/><stop offset="0.5" stop-color="#ff00ff"/><stop offset="1" stop-color="#b00000"/></linearGradient></defs><polygon points="1378.9,683.7 1378.9,683.7 1378.8,683.8 1378.7,683.8 1378.7,683.8 1378.6,683.8 1378.6,683.8 1378.6,683.8 1378.5,683.8 1378.5,683.8 1378.4,683.8 1378.3,683.9 1378.3,683.9 1378.2,683.9 1378.2,683.9 1378.1,683.9 1378.0,683.9 1378.0,683.9 1377.9,683.9 1377.8,683.9 1377.7,683.9 1377.6,683.9 1377.5,683.9 1377.4,683.9 1377.3,683.9 1377.2,683.8 1377.1,683.8 1376.9,683.7 1376.8,683.7 1376.6,683.6 1376.4,683.5 1376.1,683.4 1375.9,683.2 1375.6,683.1 1375.4,682.9 1375.1,682.7 1374.8,682.5 1374.4,682.3 1374.0,682.0 1373.6,681.7 1373.2,681.4 1372.7,681.0 1372.3,680.7 1371.7,680.3 1371.2,679.9 1370.6,679.5 1370.0,679.0 1369.3,678.5 1368.6,678.0 1367.8,677.4 1366.9,676.8 1366.0,676.1 1365.0,675.4 1364.0,674.7 1362.9,673.9 1361.8,673.1 1360.5,672.2 1359.3,671.2 1357.9,670.1 1356.5,668.9 1355.0,667.6 1353.4,666.2 1351.8,664.7 1350.1,663.0 1348.2,660.9 1346.2,658.5 1344.0,655.9 1341.7,652.8 1339.2,649.3 1336.5,645.3 1333.7,640.9 1330.8,636.0 1327.6,630.3 1324.3,623.9 1320.8,616.9 1317.0,609.1 1313.1,600.3 1308.8,590.7 1304.3,580.1 1299.7,568.6 1295.1,555.9 1290.5,542.1 1285.8,527.2 1281.2,511.2 1276.6,494.4 1272.0,476.3 1267.5,457.2 1263.1,437.4 1259.2,417.5 1255.6,397.2 1252.2,376.4 1249.3,355.6 1247.0,335.4 1245.3,315.7 1244.1,296.2 1243.5,277.3 1243.6,259.4 1244.5,242.4 1246.1,226.0 1248.5,210.8 1251.6,197.1 1255.5,184.9 1260.2,173.9 1265.6,164.5 1271.4,156.8 1277.8,150.9 1284.8,146.8 1292.1,144.1 1299.6,142.5 1307.2,142.2 1315.2,143.3 1323.2,145.2 1331.3,147.5 1339.3,150.2 1347.5,153.4 1355.6,157.1 1363.5,160.7 1371.2,164.5 1378.9,168.4 1386.4,172.4 1393.9,176.6 1401.2,180.9 1408.5,185.3 1415.8,189.8 1423.0,194.4 1430.3,199.2 1437.5,204.0 1444.6,209.0 1451.8,214.0 1459.0,219.1 1466.1,224.3 1473.2,229.6 1480.3,234.9 1487.4,240.3 1494.5,245.7 1501.6,251.2 1508.7,256.7 1515.8,262.3 1522.9,267.9 1530.0,273.5 1537.1,279.2 1544.2,284.9 1551.3,290.6 1558.4,296.3 1565.4,302.0 1572.5,307.7 1579.5,313.4 1586.6,319.1 1593.6,324.8 1600.5,330.4 1607.4,336.1 1614.3,341.7 1621.1,347.3 1627.9,352.9 1634.7,358.4 1641.3,363.8 1647.9,369.3 1654.5,374.6 1660.9,379.9 1667.3,385.1 1673.6,390.3 1679.8,395.3 1685.9,400.3 1691.9,405.2 1697.8,410.0 1703.5,414.7 1709.1,419.3 1714.6,423.8 1719.8,428.1 1724.9,432.2 1729.7,436.2 1734.4,440.0 1739.0,443.8 1743.4,447.4 1747.7,450.9 1751.9,454.3 1755.8,457.5 1759.6,460.6 1763.2,463.5 1766.6,466.3 1769.8,468.9 1772.9,471.4 1775.8,473.8 1778.6,476.1 1781.2,478.2 1783.7,480.3 1786.0,482.2 1788.2,484.0 1790.2,485.7 1792.2,487.3 1794.1,488.8 1795.8,490.2 1797.5,491.6 1799.1,492.8 1800.5,494.1 1801.9,495.2 1803.3,496.3 1804.6,497.4 1805.8,498.4 1807.0,499.4 1808.1,500.3 1809.2,501.2 1810.2,502.0 1811.2,502.8 1812.1,503.6 1813.0,504.3 1813.8,504.9 1814.6,505.5 1815.3,506.1 1816.0,506.7 1816.6,507.2 1817.1,507.6 1817.7,508.1 1818.2,508.5 1818.6,508.9 1819.1,509.2 1819.5,509.6 1819.9,509.9 1820.2,510.2 1820.6,510.4 1820.8,510.7 1821.1,510.9 1821.3,511.1 1821.5,511.2 1821.7,511.4 1821.9,511.6 1822.1,511.7 1822.3,511.9 1822.4,512.0 1822.6,512.1 1822.7,512.2 1822.9,512.3 1823.0,512.5 1823.1,512.6 1823.3,512.7 1823.4,512.8 1823.6,512.9 1823.7,513.0 1823.8,513.1 1823.9,513.2 1824.0,513.3 1824.1,513.4 1824.2,513.4 1824.3,513.5 1824.3,513.6 1824.4,513.6 1824.4,513.6 1824.5,513.7 1824.5,513.7 1824.5,513.7 1824.6,513.7 1824.6,513.7 1824.6,513.8" fill="url(#fbl)"/><polygon points="1378.9,683.7 1378.9,683.7 1378.8,683.8 1378.7,683.8 1378.7,683.8 1378.6,683.8 1378.6,683.8 1378.6,683.8 1378.5,683.8 1378.5,683.8 1378.4,683.8 1378.3,683.9 1378.3,683.9 1378.2,683.9 1378.2,683.9 1378.1,683.9 1378.0,683.9 1378.0,683.9 1377.9,683.9 1377.8,683.9 1377.7,683.9 1377.6,683.9 1377.5,683.9 1377.4,683.9 1377.3,683.9 1377.2,683.8 1377.1,683.8 1376.9,683.7 1376.8,683.7 1376.6,683.6 1376.4,683.5 1376.1,683.4 1375.9,683.2 1375.6,683.1 1375.4,682.9 1375.1,682.7 1374.8,682.5 1374.4,682.3 1374.0,682.0 1373.6,681.7 1373.2,681.4 1372.7,681.0 1372.3,680.7 1371.7,680.3 1371.2,679.9 1370.6,679.5 1370.0,679.0 1369.3,678.5 1368.6,678.0 1367.8,677.4 1366.9,676.8 1366.0,676.1 1365.0,675.4 1364.0,674.7 1362.9,673.9 1361.8,673.1 1360.5,672.2 1359.3,671.2 1357.9,670.1 1356.5,668.9 1355.0,667.6 1353.4,666.2 1351.8,664.7 1350.1,663.0 1348.2,660.9 1346.2,658.5 1344.0,655.9 1341.7,652.8 1339.2,649.3 1336.5,645.3 1333.7,640.9 1330.8,636.0 1327.6,630.3 1324.3,623.9 1320.8,616.9 1317.0,609.1 1313.1,600.3 1308.8,590.7 1304.3,580.1 1299.7,568.6 1295.1,555.9 1290.5,542.1 1285.8,527.2 1281.2,511.2 1276.6,494.4 1272.0,476.3 1267.5,457.2 1263.1,437.4 1259.2,417.5 1255.6,397.2 1252.2,376.4 1249.3,355.6 1247.0,335.4 1245.3,315.7 1244.1,296.2 1243.5,277.3 1243.6,259.4 1244.5,242.4 1246.1,226.0 1248.5,210.8 1251.6,197.1 1255.5,184.9 1260.2,173.9 1265.6,164.5 1271.4,156.8 1277.8,150.9 1284.8,146.8 1292.1,144.1 1299.6,142.5 1307.2,142.2 1315.2,143.3 1323.2,145.2 1331.3,147.5 1339.3,150.2 1347.5,153.4 1355.6,157.1 1363.5,160.7 1371.2,164.5 1378.9,168.4 1386.4,172.4 1393.9,176.6 1401.2,180.9 1408.5,185.3 1415.8,189.8 1423.0,194.4 1430.3,199.2 1437.5,204.0 1444.6,209.0 1451.8,214.0 1459.0,219.1 1466.1,224.3 1473.2,229.6 1480.3,234.9 1487.4,240.3 1494.5,245.7 1501.6,251.2 1508.7,256.7 1515.8,262.3 1522.9,267.9 1530.0,273.5 1537.1,279.2 1544.2,284.9 1551.3,290.6 1558.4,296.3 1565.4,302.0 1572.5,307.7 1579.5,313.4 1586.6,319.1 1593.6,324.8 1600.5,330.4 1607.4,336.1 1614.3,341.7 1621.1,347.3 1627.9,352.9 1634.7,358.4 1641.3,363.8 1647.9,369.3 1654.5,374.6 1660.9,379.9 1667.3,385.1 1673.6,390.3 1679.8,395.3 1685.9,400.3 1691.9,405.2 1697.8,410.0 1703.5,414.7 1709.1,419.3 1714.6,423.8 1719.8,428.1 1724.9,432.2 1729.7,436.2 1734.4,440.0 1739.0,443.8 1743.4,447.4 1747.7,450.9 1751.9,454.3 1755.8,457.5 1759.6,460.6 1763.2,463.5 1766.6,466.3 1769.8,468.9 1772.9,471.4 1775.8,473.8 1778.6,476.1 1781.2,478.2 1783.7,480.3 1786.0,482.2 1788.2,484.0 1790.2,485.7 1792.2,487.3 1794.1,488.8 1795.8,490.2 1797.5,491.6 1799.1,492.8 1800.5,494.1 1801.9,495.2 1803.3,496.3 1804.6,497.4 1805.8,498.4 1807.0,499.4 1808.1,500.3 1809.2,501.2 1810.2,502.0 1811.2,502.8 1812.1,503.6 1813.0,504.3 1813.8,504.9 1814.6,505.5 1815.3,506.1 1816.0,506.7 1816.6,507.2 1817.1,507.6 1817.7,508.1 1818.2,508.5 1818.6,508.9 1819.1,509.2 1819.5,509.6 1819.9,509.9 1820.2,510.2 1820.6,510.4 1820.8,510.7 1821.1,510.9 1821.3,511.1 1821.5,511.2 1821.7,511.4 1821.9,511.6 1822.1,511.7 1822.3,511.9 1822.4,512.0 1822.6,512.1 1822.7,512.2 1822.9,512.3 1823.0,512.5 1823.1,512.6 1823.3,512.7 1823.4,512.8 1823.6,512.9 1823.7,513.0 1823.8,513.1 1823.9,513.2 1824.0,513.3 1824.1,513.4 1824.2,513.4 1824.3,513.5 1824.3,513.6 1824.4,513.6 1824.4,513.6 1824.5,513.7 1824.5,513.7 1824.5,513.7 1824.6,513.7 1824.6,513.7 1824.6,513.8" fill="url(#fbr)"/><polygon points="1489.1,472.2 1479.0,295.2 1749.3,471.5" fill="url(#fby)"/><polygon points="1489.1,472.2 1479.0,295.2 1359.8,647.8" fill="url(#fbc)"/><polygon points="1489.1,472.2 1359.8,647.8 1749.3,471.5" fill="url(#fbm)"/><polygon points="1749.3,471.5 1479.0,295.2 1359.8,647.8" fill="url(#fbw)"/></svg>
<canvas id="cie" width="667" height="550" style="position:absolute;left:1241px;top:137px"></canvas>
<script>
(function(){
var L=[[0.17410,0.00500],[0.17408,0.00499],[0.17404,0.00498],[0.17401,0.00497],[0.17396,0.00495],[0.17392,0.00493],[0.17388,0.00492],[0.17383,0.00491],[0.17380,0.00490],[0.17377,0.00490],[0.17375,0.00490],[0.17372,0.00490],[0.17370,0.00490],[0.17368,0.00490],[0.17365,0.00490],[0.17363,0.00490],[0.17360,0.00490],[0.17357,0.00489],[0.17353,0.00488],[0.17349,0.00487],[0.17346,0.00485],[0.17342,0.00483],[0.17338,0.00482],[0.17334,0.00481],[0.17330,0.00480],[0.17326,0.00480],[0.17323,0.00479],[0.17319,0.00479],[0.17316,0.00479],[0.17312,0.00480],[0.17308,0.00480],[0.17304,0.00480],[0.17300,0.00480],[0.17296,0.00480],[0.17291,0.00480],[0.17286,0.00480],[0.17281,0.00480],[0.17276,0.00480],[0.17271,0.00480],[0.17266,0.00480],[0.17260,0.00480],[0.17254,0.00480],[0.17249,0.00479],[0.17243,0.00479],[0.17237,0.00478],[0.17231,0.00478],[0.17224,0.00478],[0.17217,0.00479],[0.17210,0.00480],[0.17202,0.00482],[0.17195,0.00484],[0.17187,0.00487],[0.17179,0.00491],[0.17170,0.00495],[0.17161,0.00499],[0.17151,0.00504],[0.17140,0.00510],[0.17128,0.00517],[0.17116,0.00524],[0.17103,0.00532],[0.17089,0.00540],[0.17075,0.00549],[0.17061,0.00559],[0.17045,0.00569],[0.17030,0.00580],[0.17014,0.00591],[0.16999,0.00603],[0.16982,0.00616],[0.16966,0.00629],[0.16948,0.00643],[0.16930,0.00657],[0.16911,0.00673],[0.16890,0.00690],[0.16868,0.00708],[0.16845,0.00727],[0.16822,0.00747],[0.16797,0.00767],[0.16771,0.00789],[0.16745,0.00812],[0.16718,0.00835],[0.16690,0.00860],[0.16662,0.00885],[0.16633,0.00912],[0.16603,0.00939],[0.16573,0.00968],[0.16542,0.00997],[0.16509,0.01027],[0.16475,0.01058],[0.16440,0.01090],[0.16403,0.01123],[0.16366,0.01156],[0.16327,0.01190],[0.16287,0.01225],[0.16246,0.01261],[0.16203,0.01299],[0.16158,0.01339],[0.16110,0.01380],[0.16060,0.01423],[0.16009,0.01468],[0.15955,0.01514],[0.15899,0.01562],[0.15842,0.01611],[0.15783,0.01662],[0.15722,0.01715],[0.15660,0.01770],[0.15596,0.01826],[0.15531,0.01883],[0.15464,0.01941],[0.15396,0.02001],[0.15325,0.02063],[0.15252,0.02128],[0.15177,0.02197],[0.15100,0.02270],[0.15020,0.02346],[0.14938,0.02423],[0.14854,0.02504],[0.14768,0.02588],[0.14680,0.02675],[0.14589,0.02768],[0.14496,0.02866],[0.14400,0.02970],[0.14303,0.03077],[0.14205,0.03184],[0.14105,0.03295],[0.14002,0.03412],[0.13897,0.03537],[0.13786,0.03673],[0.13671,0.03823],[0.13550,0.03990],[0.13423,0.04169],[0.13293,0.04357],[0.13157,0.04556],[0.13018,0.04767],[0.12873,0.04994],[0.12724,0.05236],[0.12569,0.05498],[0.12410,0.05780],[0.12246,0.06078],[0.12078,0.06387],[0.11906,0.06712],[0.11728,0.07055],[0.11545,0.07420],[0.11356,0.07810],[0.11162,0.08229],[0.10960,0.08680],[0.10752,0.09158],[0.10539,0.09657],[0.10320,0.10180],[0.10096,0.10731],[0.09864,0.11313],[0.09627,0.11928],[0.09382,0.12579],[0.09130,0.13270],[0.08869,0.13996],[0.08597,0.14753],[0.08317,0.15543],[0.08031,0.16367],[0.07742,0.17230],[0.07450,0.18133],[0.07159,0.19079],[0.06870,0.20070],[0.06581,0.21107],[0.06289,0.22188],[0.05995,0.23311],[0.05701,0.24474],[0.05407,0.25677],[0.05114,0.26916],[0.04825,0.28191],[0.04540,0.29500],[0.04255,0.30854],[0.03967,0.32259],[0.03679,0.33707],[0.03395,0.35189],[0.03117,0.36695],[0.02848,0.38216],[0.02591,0.39744],[0.02350,0.41270],[0.02120,0.42809],[0.01895,0.44378],[0.01680,0.45966],[0.01475,0.47563],[0.01284,0.49159],[0.01110,0.50744],[0.00954,0.52308],[0.00820,0.53840],[0.00704,0.55354],[0.00602,0.56865],[0.00515,0.58365],[0.00447,0.59849],[0.00398,0.61310],[0.00371,0.62739],[0.00368,0.64132],[0.00390,0.65480],[0.00436,0.66796],[0.00504,0.68091],[0.00594,0.69359],[0.00707,0.70591],[0.00842,0.71781],[0.01001,0.72920],[0.01183,0.74003],[0.01390,0.75020],[0.01624,0.75981],[0.01885,0.76895],[0.02172,0.77759],[0.02481,0.78570],[0.02810,0.79323],[0.03157,0.80015],[0.03517,0.80642],[0.03890,0.81200],[0.04280,0.81684],[0.04691,0.82095],[0.05122,0.82440],[0.05567,0.82724],[0.06024,0.82954],[0.06489,0.83135],[0.06959,0.83276],[0.07430,0.83380],[0.07907,0.83434],[0.08394,0.83426],[0.08891,0.83366],[0.09393,0.83263],[0.09900,0.83127],[0.10408,0.82968],[0.10915,0.82796],[0.11420,0.82620],[0.11925,0.82430],[0.12434,0.82211],[0.12944,0.81969],[0.13456,0.81709],[0.13965,0.81436],[0.14472,0.81155],[0.14974,0.80872],[0.15470,0.80590],[0.15960,0.80307],[0.16445,0.80018],[0.16926,0.79721],[0.17404,0.79419],[0.17879,0.79111],[0.18351,0.78798],[0.18821,0.78481],[0.19290,0.78160],[0.19756,0.77835],[0.20219,0.77505],[0.20679,0.77170],[0.21137,0.76831],[0.21594,0.76487],[0.22050,0.76139],[0.22505,0.75786],[0.22960,0.75430],[0.23415,0.75069],[0.23869,0.74704],[0.24323,0.74334],[0.24776,0.73959],[0.25228,0.73582],[0.25679,0.73200],[0.26130,0.72816],[0.26580,0.72430],[0.27029,0.72041],[0.27478,0.71647],[0.27926,0.71251],[0.28373,0.70851],[0.28820,0.70449],[0.29267,0.70045],[0.29713,0.69638],[0.30160,0.69230],[0.30607,0.68820],[0.31053,0.68407],[0.31499,0.67992],[0.31945,0.67575],[0.32391,0.67156],[0.32837,0.66735],[0.33283,0.66313],[0.33730,0.65890],[0.34177,0.65465],[0.34625,0.65038],[0.35073,0.64610],[0.35521,0.64179],[0.35969,0.63748],[0.36416,0.63316],[0.36863,0.62883],[0.37310,0.62450],[0.37756,0.62016],[0.38202,0.61581],[0.38647,0.61145],[0.39093,0.60708],[0.39537,0.60271],[0.39982,0.59834],[0.40426,0.59397],[0.40870,0.58960],[0.41314,0.58523],[0.41758,0.58087],[0.42202,0.57649],[0.42646,0.57212],[0.43089,0.56776],[0.43530,0.56340],[0.43971,0.55904],[0.44410,0.55470],[0.44848,0.55036],[0.45285,0.54603],[0.45721,0.54169],[0.46156,0.53737],[0.46589,0.53305],[0.47021,0.52875],[0.47452,0.52447],[0.47880,0.52020],[0.48307,0.51595],[0.48733,0.51170],[0.49157,0.50747],[0.49580,0.50326],[0.50001,0.49906],[0.50420,0.49488],[0.50836,0.49073],[0.51250,0.48660],[0.51662,0.48249],[0.52072,0.47840],[0.52480,0.47433],[0.52886,0.47029],[0.53289,0.46627],[0.53689,0.46228],[0.54086,0.45832],[0.54480,0.45440],[0.54871,0.45051],[0.55260,0.44665],[0.55646,0.44282],[0.56029,0.43902],[0.56408,0.43525],[0.56783,0.43153],[0.57154,0.42784],[0.57520,0.42420],[0.57882,0.42059],[0.58240,0.41701],[0.58594,0.41347],[0.58944,0.40996],[0.59289,0.40651],[0.59629,0.40311],[0.59963,0.39977],[0.60290,0.39650],[0.60610,0.39330],[0.60925,0.39017],[0.61233,0.38710],[0.61536,0.38409],[0.61833,0.38112],[0.62126,0.37821],[0.62415,0.37534],[0.62700,0.37250],[0.62981,0.36970],[0.63259,0.36693],[0.63532,0.36421],[0.63801,0.36154],[0.64064,0.35891],[0.64322,0.35635],[0.64574,0.35384],[0.64820,0.35140],[0.65059,0.34903],[0.65293,0.34672],[0.65521,0.34447],[0.65743,0.34227],[0.65960,0.34014],[0.66172,0.33805],[0.66378,0.33600],[0.66580,0.33400],[0.66777,0.33204],[0.66968,0.33014],[0.67153,0.32828],[0.67334,0.32648],[0.67509,0.32471],[0.67681,0.32300],[0.67847,0.32133],[0.68010,0.31970],[0.68168,0.31812],[0.68321,0.31659],[0.68469,0.31511],[0.68613,0.31367],[0.68752,0.31227],[0.68888,0.31091],[0.69020,0.30959],[0.69150,0.30830],[0.69276,0.30705],[0.69398,0.30584],[0.69516,0.30467],[0.69631,0.30354],[0.69742,0.30245],[0.69851,0.30137],[0.69956,0.30033],[0.70060,0.29930],[0.70161,0.29830],[0.70258,0.29733],[0.70352,0.29639],[0.70444,0.29547],[0.70533,0.29457],[0.70620,0.29370],[0.70706,0.29284],[0.70790,0.29200],[0.70873,0.29117],[0.70954,0.29036],[0.71032,0.28958],[0.71109,0.28881],[0.71185,0.28805],[0.71258,0.28732],[0.71330,0.28660],[0.71400,0.28590],[0.71468,0.28521],[0.71535,0.28455],[0.71600,0.28390],[0.71663,0.28326],[0.71725,0.28265],[0.71785,0.28205],[0.71843,0.28146],[0.71900,0.28090],[0.71955,0.28035],[0.72009,0.27983],[0.72062,0.27932],[0.72113,0.27882],[0.72162,0.27835],[0.72209,0.27789],[0.72255,0.27744],[0.72300,0.27700],[0.72343,0.27658],[0.72384,0.27617],[0.72423,0.27578],[0.72461,0.27540],[0.72497,0.27503],[0.72532,0.27468],[0.72567,0.27434],[0.72600,0.27400],[0.72633,0.27367],[0.72664,0.27336],[0.72694,0.27306],[0.72723,0.27277],[0.72751,0.27249],[0.72778,0.27222],[0.72805,0.27195],[0.72830,0.27170],[0.72855,0.27145],[0.72878,0.27122],[0.72901,0.27099],[0.72923,0.27077],[0.72943,0.27057],[0.72963,0.27037],[0.72982,0.27018],[0.73000,0.27000],[0.73017,0.26983],[0.73032,0.26968],[0.73047,0.26953],[0.73060,0.26940],[0.73073,0.26927],[0.73085,0.26915],[0.73098,0.26902],[0.73110,0.26890],[0.73122,0.26878],[0.73134,0.26866],[0.73146,0.26854],[0.73157,0.26843],[0.73169,0.26831],[0.73179,0.26821],[0.73190,0.26810],[0.73200,0.26800],[0.73210,0.26790],[0.73219,0.26781],[0.73228,0.26772],[0.73236,0.26764],[0.73245,0.26755],[0.73253,0.26747],[0.73261,0.26739],[0.73270,0.26730],[0.73279,0.26721],[0.73288,0.26712],[0.73297,0.26703],[0.73306,0.26694],[0.73314,0.26686],[0.73323,0.26677],[0.73332,0.26668],[0.73340,0.26660],[0.73348,0.26652],[0.73356,0.26644],[0.73364,0.26636],[0.73372,0.26628],[0.73379,0.26621],[0.73387,0.26613],[0.73394,0.26606],[0.73400,0.26600],[0.73406,0.26594],[0.73412,0.26588],[0.73417,0.26583],[0.73423,0.26578],[0.73427,0.26573],[0.73432,0.26568],[0.73436,0.26564],[0.73440,0.26560],[0.73444,0.26556],[0.73447,0.26553],[0.73449,0.26551],[0.73452,0.26548],[0.73454,0.26546],[0.73456,0.26544],[0.73458,0.26542],[0.73460,0.26540],[0.73462,0.26538],[0.73463,0.26537],[0.73465,0.26535],[0.73466,0.26534],[0.73467,0.26533],[0.73468,0.26532],[0.73469,0.26531],[0.73470,0.26530]];
var c=document.getElementById('cie');var ctx=c.getContext('2d');
var W=667,H=550;var RD=0.45,RP=3,GA=1.15,OK0=0.64,OA=1.25;
var SS=2,W2=W*SS,H2=H*SS;var off=document.createElement('canvas');off.width=W2;off.height=H2;var oc=off.getContext('2d');
var img=oc.createImageData(W2,H2);var d=img.data;
function g(v){return v<=0.0031308?12.92*v:1.055*Math.pow(v,1/2.4)-0.055;}
var Rx=0.64,Ry=0.33,Gx=0.30,Gy=0.60,Bx=0.15,By=0.06;
var den=(Gy-By)*(Rx-Bx)+(Bx-Gx)*(Ry-By);
function segd(px,py,ax,ay,bx,by){var dx=bx-ax,dy=by-ay;var t=((px-ax)*dx+(py-ay)*dy)/(dx*dx+dy*dy);if(t<0)t=0;if(t>1)t=1;var ex=ax+t*dx-px,ey=ay+t*dy-py;return Math.sqrt(ex*ex+ey*ey);}
for(var py=0;py<H2;py++){for(var px=0;px<W2;px++){
 var x=((px+0.5)/SS+1241-1240.5)/795, y=(687-((py+0.5)/SS+137))/653;
 if(y<=0.001){continue;}
 var XX=x/y, ZZ=(1-x-y)/y;
 var r=3.2406*XX-1.5372-0.4986*ZZ, gg=-0.9689*XX+1.8758+0.0415*ZZ, b=0.0557*XX-0.2040+1.0570*ZZ;
 var inT=(r>=0&&gg>=0&&b>=0);
 if(r<0)r=0; if(gg<0)gg=0; if(b<0)b=0;
 var m=Math.max(r,gg,b); if(m<=0){continue;}
 r/=m; gg/=m; b/=m;
 var wR=((Gy-By)*(x-Bx)+(Bx-Gx)*(y-By))/den; if(wR<0)wR=0; if(wR>1)wR=1;
 var k=1.0-RD*Math.pow(wR,RP);
 if(inT){ r=Math.pow(r,GA); gg=Math.pow(gg,GA); b=Math.pow(b,GA); }
 else { var dd=Math.min(segd(x,y,Rx,Ry,Gx,Gy),segd(x,y,Gx,Gy,Bx,By),segd(x,y,Bx,By,Rx,Ry)); k*=OK0*(1-OA*dd); r=Math.pow(r,GA); gg=Math.pow(gg,GA); b=Math.pow(b,GA);}
 var i=(py*W2+px)*4;
 d[i]=Math.round(255*r*k); d[i+1]=Math.round(255*gg*k); d[i+2]=Math.round(255*b*k); d[i+3]=255;
}}
oc.putImageData(img,0,0);
ctx.beginPath();
for(var j=0;j<L.length;j++){var X=L[j][0]*795+1240.5-1241, Y=687-L[j][1]*653-137; if(j==0)ctx.moveTo(X,Y); else ctx.lineTo(X,Y);}
ctx.closePath(); ctx.clip();
ctx.imageSmoothingEnabled=true;ctx.imageSmoothingQuality='high';ctx.drawImage(off,0,0,W,H);
})();
</script>
<svg style="position:absolute;left:0;top:0" width="1920" height="1080" font-family="Liberation Sans">
<rect x="1240.5" y="136.5" width="667.5" height="550.5" fill="none" stroke="#8a8a8a" stroke-width="1.5"/>
<line x1="1240.5" y1="687.0" x2="1240.5" y2="694.0" stroke="#c8c8c8" stroke-width="1.5"/>
<text x="1240.5" y="711" font-size="14.5" fill="#dcdcdc" text-anchor="middle">0</text>
<line x1="1234.5" y1="687.0" x2="1240.5" y2="687.0" stroke="#c8c8c8" stroke-width="1.5"/>
<text x="1236.5" y="692.0" font-size="14.5" fill="#dcdcdc" text-anchor="end">0</text>
<line x1="1320.0" y1="687.0" x2="1320.0" y2="694.0" stroke="#c8c8c8" stroke-width="1.5"/>
<text x="1320.0" y="711" font-size="14.5" fill="#dcdcdc" text-anchor="middle">0,1</text>
<line x1="1234.5" y1="621.7" x2="1240.5" y2="621.7" stroke="#c8c8c8" stroke-width="1.5"/>
<text x="1236.5" y="626.7" font-size="14.5" fill="#dcdcdc" text-anchor="end">0,1</text>
<line x1="1399.5" y1="687.0" x2="1399.5" y2="694.0" stroke="#c8c8c8" stroke-width="1.5"/>
<text x="1399.5" y="711" font-size="14.5" fill="#dcdcdc" text-anchor="middle">0,2</text>
<line x1="1234.5" y1="556.4" x2="1240.5" y2="556.4" stroke="#c8c8c8" stroke-width="1.5"/>
<text x="1236.5" y="561.4" font-size="14.5" fill="#dcdcdc" text-anchor="end">0,2</text>
<line x1="1479.0" y1="687.0" x2="1479.0" y2="694.0" stroke="#c8c8c8" stroke-width="1.5"/>
<text x="1479.0" y="711" font-size="14.5" fill="#dcdcdc" text-anchor="middle">0,3</text>
<line x1="1234.5" y1="491.1" x2="1240.5" y2="491.1" stroke="#c8c8c8" stroke-width="1.5"/>
<text x="1236.5" y="496.1" font-size="14.5" fill="#dcdcdc" text-anchor="end">0,3</text>
<line x1="1558.5" y1="687.0" x2="1558.5" y2="694.0" stroke="#c8c8c8" stroke-width="1.5"/>
<text x="1558.5" y="711" font-size="14.5" fill="#dcdcdc" text-anchor="middle">0,4</text>
<line x1="1234.5" y1="425.8" x2="1240.5" y2="425.8" stroke="#c8c8c8" stroke-width="1.5"/>
<text x="1236.5" y="430.8" font-size="14.5" fill="#dcdcdc" text-anchor="end">0,4</text>
<line x1="1638.0" y1="687.0" x2="1638.0" y2="694.0" stroke="#c8c8c8" stroke-width="1.5"/>
<text x="1638.0" y="711" font-size="14.5" fill="#dcdcdc" text-anchor="middle">0,5</text>
<line x1="1234.5" y1="360.5" x2="1240.5" y2="360.5" stroke="#c8c8c8" stroke-width="1.5"/>
<text x="1236.5" y="365.5" font-size="14.5" fill="#dcdcdc" text-anchor="end">0,5</text>
<line x1="1717.5" y1="687.0" x2="1717.5" y2="694.0" stroke="#c8c8c8" stroke-width="1.5"/>
<text x="1717.5" y="711" font-size="14.5" fill="#dcdcdc" text-anchor="middle">0,6</text>
<line x1="1234.5" y1="295.2" x2="1240.5" y2="295.2" stroke="#c8c8c8" stroke-width="1.5"/>
<text x="1236.5" y="300.2" font-size="14.5" fill="#dcdcdc" text-anchor="end">0,6</text>
<line x1="1797.0" y1="687.0" x2="1797.0" y2="694.0" stroke="#c8c8c8" stroke-width="1.5"/>
<text x="1797.0" y="711" font-size="14.5" fill="#dcdcdc" text-anchor="middle">0,7</text>
<line x1="1234.5" y1="229.9" x2="1240.5" y2="229.9" stroke="#c8c8c8" stroke-width="1.5"/>
<text x="1236.5" y="234.9" font-size="14.5" fill="#dcdcdc" text-anchor="end">0,7</text>
<line x1="1876.5" y1="687.0" x2="1876.5" y2="694.0" stroke="#c8c8c8" stroke-width="1.5"/>
<text x="1876.5" y="711" font-size="14.5" fill="#dcdcdc" text-anchor="middle">0,8</text>
<line x1="1234.5" y1="164.6" x2="1240.5" y2="164.6" stroke="#c8c8c8" stroke-width="1.5"/>
<text x="1236.5" y="169.6" font-size="14.5" fill="#dcdcdc" text-anchor="end">0,8</text>
<text x="1561" y="131" font-size="14.5" fill="#dcdcdc" text-anchor="middle">CIE 1931 xy</text>
<rect x="1471.3" y="285.8" width="14.4" height="14.4" fill="none" stroke="#ffffff" stroke-width="2"/>
<rect x="1474.3" y="324.3" width="14.4" height="14.4" fill="none" stroke="#ffffff" stroke-width="2"/>
<rect x="1475.8" y="358.2" width="14.4" height="14.4" fill="none" stroke="#ffffff" stroke-width="2"/>
<rect x="1477.2" y="393.5" width="14.4" height="14.4" fill="none" stroke="#ffffff" stroke-width="2"/>
<rect x="1480.2" y="427.6" width="14.4" height="14.4" fill="none" stroke="#ffffff" stroke-width="2"/>
<rect x="1567.2" y="347.4" width="14.4" height="14.4" fill="none" stroke="#ffffff" stroke-width="2"/>
<rect x="1548.7" y="372.4" width="14.4" height="14.4" fill="none" stroke="#ffffff" stroke-width="2"/>
<rect x="1533.2" y="393.5" width="14.4" height="14.4" fill="none" stroke="#ffffff" stroke-width="2"/>
<rect x="1516.1" y="415.4" width="14.4" height="14.4" fill="none" stroke="#ffffff" stroke-width="2"/>
<rect x="1498.4" y="439.5" width="14.4" height="14.4" fill="none" stroke="#ffffff" stroke-width="2"/>
<rect x="1742.2" y="463.7" width="14.4" height="14.4" fill="none" stroke="#ffffff" stroke-width="2"/>
<rect x="1684.7" y="463.7" width="14.4" height="14.4" fill="none" stroke="#ffffff" stroke-width="2"/>
<rect x="1633.2" y="463.7" width="14.4" height="14.4" fill="none" stroke="#ffffff" stroke-width="2"/>
<rect x="1586.3" y="463.7" width="14.4" height="14.4" fill="none" stroke="#ffffff" stroke-width="2"/>
<rect x="1532.2" y="463.7" width="14.4" height="14.4" fill="none" stroke="#ffffff" stroke-width="2"/>
<rect x="1411.2" y="463.8" width="14.4" height="14.4" fill="none" stroke="#ffffff" stroke-width="2"/>
<rect x="1425.5" y="463.8" width="14.4" height="14.4" fill="none" stroke="#ffffff" stroke-width="2"/>
<rect x="1439.7" y="463.8" width="14.4" height="14.4" fill="none" stroke="#ffffff" stroke-width="2"/>
<rect x="1454.0" y="463.8" width="14.4" height="14.4" fill="none" stroke="#ffffff" stroke-width="2"/>
<rect x="1467.2" y="463.8" width="14.4" height="14.4" fill="none" stroke="#ffffff" stroke-width="2"/>
<rect x="1352.1" y="639.5" width="14.4" height="14.4" fill="none" stroke="#ffffff" stroke-width="2"/>
<rect x="1380.3" y="601.2" width="14.4" height="14.4" fill="none" stroke="#ffffff" stroke-width="2"/>
<rect x="1405.7" y="567.2" width="14.4" height="14.4" fill="none" stroke="#ffffff" stroke-width="2"/>
<rect x="1429.3" y="534.6" width="14.4" height="14.4" fill="none" stroke="#ffffff" stroke-width="2"/>
<rect x="1456.2" y="498.8" width="14.4" height="14.4" fill="none" stroke="#ffffff" stroke-width="2"/>
<rect x="1488.2" y="577.4" width="14.4" height="14.4" fill="none" stroke="#ffffff" stroke-width="2"/>
<rect x="1487.2" y="553.6" width="14.4" height="14.4" fill="none" stroke="#ffffff" stroke-width="2"/>
<rect x="1485.3" y="531.8" width="14.4" height="14.4" fill="none" stroke="#ffffff" stroke-width="2"/>
<rect x="1484.3" y="510.6" width="14.4" height="14.4" fill="none" stroke="#ffffff" stroke-width="2"/>
<rect x="1482.9" y="487.4" width="14.4" height="14.4" fill="none" stroke="#ffffff" stroke-width="2"/>
<rect x="1481.2" y="463.7" width="14.4" height="14.4" fill="none" stroke="#000" stroke-width="2"/>
<circle cx="1511.3" cy="305.9" r="4.9" fill="#10b010" stroke="#000" stroke-width="1.4"/>
<circle cx="1506.9" cy="339.8" r="4.9" fill="#48b048" stroke="#000" stroke-width="1.4"/>
<circle cx="1502.4" cy="376.7" r="4.9" fill="#60b060" stroke="#000" stroke-width="1.4"/>
<circle cx="1500.0" cy="408.1" r="4.9" fill="#78b878" stroke="#000" stroke-width="1.4"/>
<circle cx="1496.9" cy="437.8" r="4.9" fill="#98b098" stroke="#000" stroke-width="1.4"/>
<circle cx="1583.9" cy="360.9" r="4.9" fill="#c8c000" stroke="#000" stroke-width="1.4"/>
<circle cx="1564.3" cy="384.8" r="4.9" fill="#c0c058" stroke="#000" stroke-width="1.4"/>
<circle cx="1544.4" cy="405.4" r="4.9" fill="#c0c080" stroke="#000" stroke-width="1.4"/>
<circle cx="1527.8" cy="425.9" r="4.9" fill="#c0bc88" stroke="#000" stroke-width="1.4"/>
<circle cx="1509.3" cy="445.4" r="4.9" fill="#c0c0a0" stroke="#000" stroke-width="1.4"/>
<circle cx="1708.4" cy="456.8" r="4.9" fill="#c80000" stroke="#000" stroke-width="1.4"/>
<circle cx="1668.4" cy="456.8" r="4.9" fill="#b83838" stroke="#000" stroke-width="1.4"/>
<circle cx="1617.4" cy="458.8" r="4.9" fill="#b85050" stroke="#000" stroke-width="1.4"/>
<circle cx="1575.4" cy="459.8" r="4.9" fill="#b86868" stroke="#000" stroke-width="1.4"/>
<circle cx="1532.6" cy="462.1" r="4.9" fill="#c08888" stroke="#000" stroke-width="1.4"/>
<circle cx="1433.9" cy="466.0" r="4.9" fill="#10b8c0" stroke="#000" stroke-width="1.4"/>
<circle cx="1447.9" cy="466.0" r="4.9" fill="#48b8b8" stroke="#000" stroke-width="1.4"/>
<circle cx="1460.4" cy="464.8" r="4.9" fill="#68b8b8" stroke="#000" stroke-width="1.4"/>
<circle cx="1471.5" cy="464.8" r="4.9" fill="#88b8b8" stroke="#000" stroke-width="1.4"/>
<circle cx="1483.0" cy="464.8" r="4.9" fill="#a0b8b8" stroke="#000" stroke-width="1.4"/>
<circle cx="1368.1" cy="607.0" r="4.9" fill="#0808b8" stroke="#000" stroke-width="1.4"/>
<circle cx="1393.6" cy="577.5" r="4.9" fill="#4848b8" stroke="#000" stroke-width="1.4"/>
<circle cx="1421.5" cy="545.9" r="4.9" fill="#6868b8" stroke="#000" stroke-width="1.4"/>
<circle cx="1445.3" cy="517.8" r="4.9" fill="#8080b0" stroke="#000" stroke-width="1.4"/>
<circle cx="1470.5" cy="489.7" r="4.9" fill="#9898b8" stroke="#000" stroke-width="1.4"/>
<circle cx="1483.2" cy="557.1" r="4.9" fill="#b010b0" stroke="#000" stroke-width="1.4"/>
<circle cx="1485.4" cy="535.7" r="4.9" fill="#b048b0" stroke="#000" stroke-width="1.4"/>
<circle cx="1488.5" cy="514.9" r="4.9" fill="#b870b0" stroke="#000" stroke-width="1.4"/>
<circle cx="1489.9" cy="499.1" r="4.9" fill="#c088c0" stroke="#000" stroke-width="1.4"/>
<circle cx="1491.1" cy="481.3" r="4.9" fill="#c0a0c0" stroke="#000" stroke-width="1.4"/>
<circle cx="1491.4" cy="468.1" r="4.9" fill="#fff" stroke="#000" stroke-width="1.4"/>
<defs><linearGradient id="ins1" x1="0" y1="0" x2="1" y2="1"><stop offset="0" stop-color="#d0ff00"/><stop offset="0.5" stop-color="#ffff10"/><stop offset="1" stop-color="#ffb000"/></linearGradient><linearGradient id="ins2" x1="0" y1="0" x2="1" y2="1"><stop offset="0" stop-color="#6a9a00"/><stop offset="0.5" stop-color="#9a9400"/><stop offset="1" stop-color="#9a6a00"/></linearGradient></defs>
<rect x="1717.5" y="135.5" width="192" height="203" fill="#2a2a2a"/>
<polygon points="1719,137 1908,137 1908,315.5 1719,157.6" fill="url(#ins2)"/>
<polygon points="1719,157.6 1908,315.5 1908,337 1719,337" fill="url(#ins1)"/>
<rect x="1718" y="136" width="191" height="202" fill="none" stroke="#8a8a8a" stroke-width="2"/>
<rect x="1806.3" y="229.4" width="14.4" height="14.4" fill="none" stroke="#fff" stroke-width="2"/>
<circle cx="1865.4" cy="272.9" r="4.9" fill="#c8c000" stroke="#000" stroke-width="1.4"/>
</svg>
<div style="position:absolute;left:1206px;top:735px;width:680px;height:17px;background:#2c2c2c"></div>
<div style="position:absolute;left:1206px;top:752px;width:680px;height:17px;background:#151515"></div>
<div style="position:absolute;left:1206px;top:735px;width:20px;height:34px;background:#000"></div>
<div style="position:absolute;left:1206px;top:735px;width:680px;height:214px;overflow:hidden">
<div style="position:absolute;left:194.0px;top:5px;font:20px 'Liberation Sans', sans-serif;letter-spacing:0.6px;color:#fafafa;white-space:nowrap;line-height:26px">20%</div>
<div style="position:absolute;left:305.5px;top:5px;font:20px 'Liberation Sans', sans-serif;letter-spacing:0.6px;color:#fafafa;white-space:nowrap;line-height:26px">40%</div>
<div style="position:absolute;left:417.0px;top:5px;font:20px 'Liberation Sans', sans-serif;letter-spacing:0.6px;color:#fafafa;white-space:nowrap;line-height:26px">60%</div>
<div style="position:absolute;left:528.5px;top:5px;font:20px 'Liberation Sans', sans-serif;letter-spacing:0.6px;color:#fafafa;white-space:nowrap;line-height:26px">80%</div>
<div style="position:absolute;left:640.0px;top:5px;font:20px 'Liberation Sans', sans-serif;letter-spacing:0.6px;color:#fafafa;white-space:nowrap;line-height:26px">100%</div>
<div style="position:absolute;left:20px;top:34px;width:660px;height:31px;background:#404040"></div>
<div style="position:absolute;left:0;top:34px;width:20px;height:31px;background:#2a2a2a"></div>
<div style="position:absolute;left:26px;top:34px;font:21px 'Liberation Sans', sans-serif;letter-spacing:0.5px;color:#f2f2f2;white-space:nowrap;line-height:31px">x: CIE31</div>
<div style="position:absolute;left:194.0px;top:34px;font:21px 'Liberation Sans', sans-serif;letter-spacing:0.9px;color:#f2f2f2;white-space:nowrap;line-height:31px">0,3390</div>
<div style="position:absolute;left:305.5px;top:34px;font:21px 'Liberation Sans', sans-serif;letter-spacing:0.9px;color:#f2f2f2;white-space:nowrap;line-height:31px">0,3616</div>
<div style="position:absolute;left:417.0px;top:34px;font:21px 'Liberation Sans', sans-serif;letter-spacing:0.9px;color:#f2f2f2;white-space:nowrap;line-height:31px">0,3839</div>
<div style="position:absolute;left:528.5px;top:34px;font:21px 'Liberation Sans', sans-serif;letter-spacing:0.9px;color:#f2f2f2;white-space:nowrap;line-height:31px">0,4077</div>
<div style="position:absolute;left:640.0px;top:34px;font:21px 'Liberation Sans', sans-serif;letter-spacing:0.9px;color:#f2f2f2;white-space:nowrap;line-height:31px">0,4332</div>
<div style="position:absolute;left:20px;top:65px;width:660px;height:31px;background:#838383"></div>
<div style="position:absolute;left:0;top:65px;width:20px;height:31px;background:#2a2a2a"></div>
<div style="position:absolute;left:26px;top:65px;font:21px 'Liberation Sans', sans-serif;letter-spacing:0.5px;color:#f2f2f2;white-space:nowrap;line-height:31px">y: CIE31</div>
<div style="position:absolute;left:194.0px;top:65px;font:21px 'Liberation Sans', sans-serif;letter-spacing:0.9px;color:#f2f2f2;white-space:nowrap;line-height:31px">0,3668</div>
<div style="position:absolute;left:305.5px;top:65px;font:21px 'Liberation Sans', sans-serif;letter-spacing:0.9px;color:#f2f2f2;white-space:nowrap;line-height:31px">0,3978</div>
<div style="position:absolute;left:417.0px;top:65px;font:21px 'Liberation Sans', sans-serif;letter-spacing:0.9px;color:#f2f2f2;white-space:nowrap;line-height:31px">0,4284</div>
<div style="position:absolute;left:528.5px;top:65px;font:21px 'Liberation Sans', sans-serif;letter-spacing:0.9px;color:#f2f2f2;white-space:nowrap;line-height:31px">0,4612</div>
<div style="position:absolute;left:640.0px;top:65px;font:21px 'Liberation Sans', sans-serif;letter-spacing:0.9px;color:#f2f2f2;white-space:nowrap;line-height:31px">0,4961</div>
<div style="position:absolute;left:20px;top:96px;width:660px;height:31px;background:#404040"></div>
<div style="position:absolute;left:0;top:96px;width:20px;height:31px;background:#2a2a2a"></div>
<div style="position:absolute;left:26px;top:96px;font:21px 'Liberation Sans', sans-serif;letter-spacing:0.5px;color:#f2f2f2;white-space:nowrap;line-height:31px">Y</div>
<div style="position:absolute;left:194.0px;top:96px;font:21px 'Liberation Sans', sans-serif;letter-spacing:0.9px;color:#f2f2f2;white-space:nowrap;line-height:31px">202,8955</div>
<div style="position:absolute;left:305.5px;top:96px;font:21px 'Liberation Sans', sans-serif;letter-spacing:0.9px;color:#f2f2f2;white-space:nowrap;line-height:31px">195,5152</div>
<div style="position:absolute;left:417.0px;top:96px;font:21px 'Liberation Sans', sans-serif;letter-spacing:0.9px;color:#f2f2f2;white-space:nowrap;line-height:31px">189,7260</div>
<div style="position:absolute;left:528.5px;top:96px;font:21px 'Liberation Sans', sans-serif;letter-spacing:0.9px;color:#f2f2f2;white-space:nowrap;line-height:31px">184,6264</div>
<div style="position:absolute;left:640.0px;top:96px;font:21px 'Liberation Sans', sans-serif;letter-spacing:0.9px;color:#f2f2f2;white-space:nowrap;line-height:31px">180,0130</div>
<div style="position:absolute;left:20px;top:127px;width:660px;height:31px;background:#838383"></div>
<div style="position:absolute;left:0;top:127px;width:20px;height:31px;background:#2a2a2a"></div>
<div style="position:absolute;left:26px;top:127px;font:21px 'Liberation Sans', sans-serif;letter-spacing:0.5px;color:#f2f2f2;white-space:nowrap;line-height:31px">Target x:CIE31</div>
<div style="position:absolute;left:194.0px;top:127px;font:21px 'Liberation Sans', sans-serif;letter-spacing:0.9px;color:#f2f2f2;white-space:nowrap;line-height:31px">0,3344</div>
<div style="position:absolute;left:305.5px;top:127px;font:21px 'Liberation Sans', sans-serif;letter-spacing:0.9px;color:#f2f2f2;white-space:nowrap;line-height:31px">0,3564</div>
<div style="position:absolute;left:417.0px;top:127px;font:21px 'Liberation Sans', sans-serif;letter-spacing:0.9px;color:#f2f2f2;white-space:nowrap;line-height:31px">0,3773</div>
<div style="position:absolute;left:528.5px;top:127px;font:21px 'Liberation Sans', sans-serif;letter-spacing:0.9px;color:#f2f2f2;white-space:nowrap;line-height:31px">0,3969</div>
<div style="position:absolute;left:640.0px;top:127px;font:21px 'Liberation Sans', sans-serif;letter-spacing:0.9px;color:#f2f2f2;white-space:nowrap;line-height:31px">0,4158</div>
<div style="position:absolute;left:20px;top:158px;width:660px;height:31px;background:#404040"></div>
<div style="position:absolute;left:0;top:158px;width:20px;height:31px;background:#2a2a2a"></div>
<div style="position:absolute;left:26px;top:158px;font:21px 'Liberation Sans', sans-serif;letter-spacing:0.5px;color:#f2f2f2;white-space:nowrap;line-height:31px">Target y:CIE31</div>
<div style="position:absolute;left:194.0px;top:158px;font:21px 'Liberation Sans', sans-serif;letter-spacing:0.9px;color:#f2f2f2;white-space:nowrap;line-height:31px">0,3648</div>
<div style="position:absolute;left:305.5px;top:158px;font:21px 'Liberation Sans', sans-serif;letter-spacing:0.9px;color:#f2f2f2;white-space:nowrap;line-height:31px">0,4013</div>
<div style="position:absolute;left:417.0px;top:158px;font:21px 'Liberation Sans', sans-serif;letter-spacing:0.9px;color:#f2f2f2;white-space:nowrap;line-height:31px">0,4358</div>
<div style="position:absolute;left:528.5px;top:158px;font:21px 'Liberation Sans', sans-serif;letter-spacing:0.9px;color:#f2f2f2;white-space:nowrap;line-height:31px">0,4682</div>
<div style="position:absolute;left:640.0px;top:158px;font:21px 'Liberation Sans', sans-serif;letter-spacing:0.9px;color:#f2f2f2;white-space:nowrap;line-height:31px">0,5006</div>
<div style="position:absolute;left:20px;top:189px;width:660px;height:31px;background:#838383"></div>
<div style="position:absolute;left:0;top:189px;width:20px;height:31px;background:#2a2a2a"></div>
<div style="position:absolute;left:26px;top:189px;font:21px 'Liberation Sans', sans-serif;letter-spacing:0.5px;color:#f2f2f2;white-space:nowrap;line-height:31px">Target Y</div>
<div style="position:absolute;left:194.0px;top:189px;font:21px 'Liberation Sans', sans-serif;letter-spacing:0.9px;color:#f2f2f2;white-space:nowrap;line-height:31px">186,8306</div>
<div style="position:absolute;left:305.5px;top:189px;font:21px 'Liberation Sans', sans-serif;letter-spacing:0.9px;color:#f2f2f2;white-space:nowrap;line-height:31px">183,5511</div>
<div style="position:absolute;left:417.0px;top:189px;font:21px 'Liberation Sans', sans-serif;letter-spacing:0.9px;color:#f2f2f2;white-space:nowrap;line-height:31px">181,0314</div>
<div style="position:absolute;left:528.5px;top:189px;font:21px 'Liberation Sans', sans-serif;letter-spacing:0.9px;color:#f2f2f2;white-space:nowrap;line-height:31px">179,0539</div>
<div style="position:absolute;left:640.0px;top:189px;font:21px 'Liberation Sans', sans-serif;letter-spacing:0.9px;color:#f2f2f2;white-space:nowrap;line-height:31px">177,4102</div>
</div>
<div style="position:absolute;left:1886px;top:769px;width:24px;height:180px;border-radius:3px;background:#6a6a6a"></div>
<div style="position:absolute;left:1889px;top:771px;width:18px;height:16px;border-radius:3px;background:#808080"></div>
<svg style="position:absolute;left:1891px;top:774px" width="14" height="8"><path d="M0 8L14 8L7 0Z" fill="#555"/></svg>
<div style="position:absolute;left:1889px;top:790px;width:18px;height:115px;border-radius:9px;background:#4a4a4a"></div>
<div style="position:absolute;left:1889px;top:931px;width:18px;height:16px;border-radius:3px;background:#808080"></div>
<svg style="position:absolute;left:1891px;top:935px" width="14" height="8"><path d="M0 0L14 0L7 8Z" fill="#555"/></svg>
<div style="position:absolute;left:1226px;top:949px;width:660px;height:19px;background:#6a6a6a"></div>
<div style="position:absolute;left:1228px;top:951px;width:20px;height:15px;border-radius:3px;background:#808080"></div>
<svg style="position:absolute;left:1233px;top:953px" width="8" height="11"><path d="M8 0L8 11L0 5.5Z" fill="#555"/></svg>
<div style="position:absolute;left:1252px;top:951px;width:553px;height:15px;border-radius:8px;background:#4a4a4a"></div>
<div style="position:absolute;left:1863px;top:951px;width:21px;height:15px;border-radius:3px;background:#808080"></div>
<svg style="position:absolute;left:1870px;top:953px" width="8" height="11"><path d="M0 0L0 11L8 5.5Z" fill="#555"/></svg>
<div style="position:absolute;left:199px;top:975px;width:1721px;height:65px;background:#303030"></div>
<div style="position:absolute;left:200px;top:977px;width:1720px;height:63px;background:linear-gradient(#474747,#383838 40%,#262626)"></div>
<div style="position:absolute;left:201px;top:978px;width:45px;height:61px;border-radius:4px;background:linear-gradient(#8c8c8c,#5a5a5a)"></div>
<div style="position:absolute;left:215px;top:980px;width:16px;height:16px;border-radius:50%;background:linear-gradient(#444,#777)"></div>
<svg style="position:absolute;left:218px;top:984px" width="10" height="6"><path d="M0 6L10 6L5 0Z" fill="#222"/></svg>
<div style="position:absolute;left:206px;top:1004px;width:35px;height:30px;border-radius:3px;background:#ffff00"></div>
<div style="position:absolute;left:252px;top:978px;width:150px;height:61px;border-radius:4px;background:linear-gradient(#8a8a8a,#5c5c5c)"></div>
<div style="position:absolute;left:257px;top:983px;width:140px;height:36px;border-radius:3px;background:#c1c0a5;box-shadow:inset 0 1px 2px rgba(0,0,0,.35)"></div>
<div style="position:absolute;left:252px;top:1022px;width:150px;text-align:center;font:normal 11px 'Liberation Sans', sans-serif;color:#2a2a2a;line-height:14px">20%</div>
<div style="position:absolute;left:404px;top:978px;width:150px;height:61px;border-radius:4px;background:linear-gradient(#8a8a8a,#5c5c5c)"></div>
<div style="position:absolute;left:409px;top:983px;width:140px;height:36px;border-radius:3px;background:#c3c188;box-shadow:inset 0 1px 2px rgba(0,0,0,.35)"></div>
<div style="position:absolute;left:404px;top:1022px;width:150px;text-align:center;font:normal 11px 'Liberation Sans', sans-serif;color:#2a2a2a;line-height:14px">40%</div>
<div style="position:absolute;left:556px;top:978px;width:150px;height:61px;border-radius:4px;background:linear-gradient(#8a8a8a,#5c5c5c)"></div>
<div style="position:absolute;left:561px;top:983px;width:140px;height:36px;border-radius:3px;background:#c2c06f;box-shadow:inset 0 1px 2px rgba(0,0,0,.35)"></div>
<div style="position:absolute;left:556px;top:1022px;width:150px;text-align:center;font:normal 11px 'Liberation Sans', sans-serif;color:#2a2a2a;line-height:14px">60%</div>
<div style="position:absolute;left:708px;top:978px;width:150px;height:61px;border-radius:4px;background:linear-gradient(#8a8a8a,#5c5c5c)"></div>
<div style="position:absolute;left:713px;top:983px;width:140px;height:36px;border-radius:3px;background:#c0bf4d;box-shadow:inset 0 1px 2px rgba(0,0,0,.35)"></div>
<div style="position:absolute;left:708px;top:1022px;width:150px;text-align:center;font:normal 11px 'Liberation Sans', sans-serif;color:#2a2a2a;line-height:14px">80%</div>
<div style="position:absolute;left:860px;top:978px;width:150px;height:61px;border-radius:4px;background:linear-gradient(#2e2e2e,#262626)"></div>
<div style="position:absolute;left:865px;top:983px;width:140px;height:36px;border-radius:3px;background:#c4c20b;box-shadow:inset 0 1px 2px rgba(0,0,0,.35)"></div>
<div style="position:absolute;left:860px;top:1022px;width:150px;text-align:center;font:bold 11px 'Liberation Sans', sans-serif;color:#fff;line-height:14px">100%</div>
<div style="position:absolute;left:1596px;top:978px;width:48px;height:60px;border-radius:4px;background:linear-gradient(#9a9a9a,#5e5e5e)"></div>
<div style="position:absolute;left:1596px;top:996px;width:48px;height:1px;background:#444"></div>
<div style="position:absolute;left:1612px;top:980px;width:18px;height:15px;border-radius:50%;background:linear-gradient(#6a6a6a,#8a8a8a)"></div>
<svg style="position:absolute;left:1616px;top:984px" width="10" height="6"><path d="M0 6L10 6L5 0Z" fill="#222"/></svg>
<div style="position:absolute;left:1606px;top:1003px;width:25px;height:25px;border:2px solid #2a2a2a;border-radius:5px;background:linear-gradient(#c8c8c8,#888)"></div>
<div style="position:absolute;left:1613px;top:1011px;width:14px;height:14px;background:#050505"></div>
<div style="position:absolute;left:1647px;top:978px;width:45px;height:30px;border-radius:4px 0 0 0;background:linear-gradient(#a6a6a6,#6a6a6a)"></div>
<div style="position:absolute;left:1659px;top:983px;width:20px;height:20px;border-radius:50%;background:linear-gradient(#6e6e6e,#9a9a9a)"></div>
<div style="position:absolute;left:1692px;top:978px;width:45px;height:30px;border-radius:0;background:linear-gradient(#a6a6a6,#6a6a6a)"></div>
<div style="position:absolute;left:1704px;top:983px;width:20px;height:20px;border-radius:50%;background:linear-gradient(#6e6e6e,#9a9a9a)"></div>
<div style="position:absolute;left:1737px;top:978px;width:45px;height:30px;border-radius:0;background:linear-gradient(#a6a6a6,#6a6a6a)"></div>
<div style="position:absolute;left:1749px;top:983px;width:20px;height:20px;border-radius:50%;background:linear-gradient(#6e6e6e,#9a9a9a)"></div>
<div style="position:absolute;left:1782px;top:978px;width:45px;height:30px;border-radius:0;background:linear-gradient(#a6a6a6,#6a6a6a)"></div>
<div style="position:absolute;left:1794px;top:983px;width:20px;height:20px;border-radius:50%;background:linear-gradient(#6e6e6e,#9a9a9a)"></div>
<div style="position:absolute;left:1827px;top:978px;width:45px;height:30px;border-radius:0;background:linear-gradient(#2c2c2c,#222)"></div>
<div style="position:absolute;left:1839px;top:983px;width:20px;height:20px;border-radius:50%;background:linear-gradient(#2a2a2a,#333)"></div>
<div style="position:absolute;left:1872px;top:978px;width:45px;height:30px;border-radius:0 4px 0 0;background:linear-gradient(#a6a6a6,#6a6a6a)"></div>
<div style="position:absolute;left:1884px;top:983px;width:20px;height:20px;border-radius:50%;background:linear-gradient(#6e6e6e,#9a9a9a)"></div>
<div style="position:absolute;left:1692px;top:978px;width:1px;height:30px;background:#3a3a3a"></div>
<div style="position:absolute;left:1737px;top:978px;width:1px;height:30px;background:#3a3a3a"></div>
<div style="position:absolute;left:1782px;top:978px;width:1px;height:30px;background:#3a3a3a"></div>
<div style="position:absolute;left:1827px;top:978px;width:1px;height:30px;background:#3a3a3a"></div>
<div style="position:absolute;left:1664px;top:989px;width:8px;height:8px;background:#222"></div>
<svg style="position:absolute;left:1710px;top:987px" width="10" height="12"><path d="M0 0L10 6L0 12Z" fill="#222"/></svg>
<div style="position:absolute;left:1749px;top:985px;width:22px;text-align:center;font:bold 10px 'Liberation Sans', sans-serif;color:#2a2a2a;line-height:14px">[··]</div>
<div style="position:absolute;left:1794px;top:981px;width:22px;text-align:center;font:bold 16px 'Liberation Sans', sans-serif;color:#2a2a2a;line-height:22px">∞</div>
<svg style="position:absolute;left:1841px;top:985px" width="16" height="16"><path d="M3 8A5 5 0 0 1 12 5M13 8A5 5 0 0 1 4 11" stroke="#111" stroke-width="2.2" fill="none"/><path d="M10 2L14 5L10 7Z M6 9L2 11L6 14Z" fill="#111"/></svg>
<div style="position:absolute;left:1647px;top:1009px;width:135px;height:30px;border-radius:0 0 0 4px;background:linear-gradient(#a8a8a8,#686868)"></div>
<div style="position:absolute;left:1783px;top:1009px;width:134px;height:30px;border-radius:0 0 4px 0;background:linear-gradient(#a8a8a8,#686868)"></div>
<div style="position:absolute;left:1667px;top:1014px;width:20px;height:20px;border-radius:50%;background:linear-gradient(#6e6e6e,#9a9a9a)"></div>
<div style="position:absolute;left:1667px;top:1013px;width:20px;text-align:center;font:bold 14px 'Liberation Sans', sans-serif;color:#2a2a2a;line-height:22px">«</div>
<div style="position:absolute;left:1879px;top:1014px;width:20px;height:20px;border-radius:50%;background:linear-gradient(#6e6e6e,#9a9a9a)"></div>
<div style="position:absolute;left:1879px;top:1013px;width:20px;text-align:center;font:bold 14px 'Liberation Sans', sans-serif;color:#2a2a2a;line-height:22px">»</div>
<div style="position:absolute;left:1703px;top:1010px;font:22px 'Liberation Sans', sans-serif;color:#2a2a2a;line-height:28px">Back</div>
<div style="position:absolute;left:1809px;top:1009px;font:23.5px 'Liberation Sans', sans-serif;color:#2a2a2a;line-height:28px">Next</div>
<div style="position:absolute;left:0;top:1040px;width:1920px;height:40px;background:#2b4f9e"></div>
<svg style="position:absolute;left:11px;top:1047px" width="28" height="26" viewBox="0 0 28 26"><path d="M0 3.5L11 2V12H0Z M12.5 1.8L27 0V12H12.5Z M0 13.5H11V24L0 22.5Z M12.5 13.5H27V26L12.5 24.2Z" fill="#fff"/></svg>
<div style="position:absolute;left:52px;top:1041px;width:57px;height:38px;background:#4d6db0;border:1px solid #6b87c4"></div>
<svg style="position:absolute;left:62px;top:1042px" width="36" height="36" viewBox="0 0 36 36"><path d="M30 18.5H11" stroke="#2aa3ea" stroke-width="3.6"/><path d="M29.5 18.5A10 10 0 1 0 26.5 26" fill="none" stroke="#2aa3ea" stroke-width="5"/><path d="M4 31C0 26 10 10 26 4C33 1.5 34 5 31 9" fill="none" stroke="#f0b818" stroke-width="2.4"/></svg>
<svg style="position:absolute;left:126px;top:1046px" width="34" height="30" viewBox="0 0 34 30"><path d="M2 5H13L15 7H32V27H2Z" fill="#e9cf82"/><rect x="5" y="2" width="24" height="8" fill="#fff" stroke="#ccc" stroke-width="0.6"/><rect x="8" y="3" width="3" height="2" fill="#3a3"/><rect x="14" y="4" width="3" height="2" fill="#c33"/><rect x="21" y="5" width="3" height="2" fill="#39c"/><path d="M1 10H33L32 28H2Z" fill="#f3dc9a"/><path d="M9 17H25V28H22V20H12V28H9Z" fill="#8fc8e8"/></svg>
<div style="position:absolute;left:190px;top:1045px;width:30px;height:30px;background:#00911a"></div>
<svg style="position:absolute;left:197px;top:1049px" width="17" height="22" viewBox="0 0 17 22"><path d="M4 6A4.5 4.5 0 0 1 13 6" stroke="#fff" stroke-width="1.5" fill="none"/><path d="M0 6H17V22H0Z" fill="#fff"/><path d="M4 10L8 9.5V13H4Z M9 9.3L13 8.8V13H9Z M4 14H8V17.5L4 17Z M9 14H13V18.2L9 17.7Z" fill="#00911a"/></svg>
<div style="position:absolute;left:238px;top:1041px;width:53px;height:38px;background:linear-gradient(#7088c0,#8da0cc);border:2px solid #eef2fa"></div>
<div style="position:absolute;left:292px;top:1041px;width:4px;height:38px;background:#8da0cc;border:1px solid #eef2fa"></div>
<svg style="position:absolute;left:248px;top:1042px" width="34" height="36" viewBox="0 0 34 36"><defs><radialGradient id="cg" cx="0.45" cy="0.55" r="0.6"><stop offset="0" stop-color="#3f3"/><stop offset="0.35" stop-color="#0a8a0a"/><stop offset="1" stop-color="#021a02"/></radialGradient></defs><path d="M7 2C1 8 2 24 10 34L31 23C24 13 15 4 7 2Z" fill="url(#cg)" stroke="#031003" stroke-width="0.8"/><text x="15.5" y="27" font-family="Liberation Sans" font-weight="bold" font-size="15" fill="#000" stroke="#2f2" stroke-width="1.6" paint-order="stroke" text-anchor="middle">5</text></svg>
<div style="position:absolute;left:300px;top:1041px;width:57px;height:38px;background:#4d6db0;border:1px solid #7b93c8"></div>
<svg style="position:absolute;left:312px;top:1044px" width="36" height="34" viewBox="0 0 36 34"><path d="M4 20C2 12 12 7 22 9C31 11 31 22 24 26C19 29 18 25 14 26C9 28 5 25 4 20Z" fill="#d2e8f6" stroke="#9cc8e6" stroke-width="0.8"/><circle cx="15" cy="19.5" r="2.3" fill="#4d6db0"/><circle cx="8.5" cy="17.5" r="2.6" fill="#e33"/><circle cx="13.5" cy="13" r="2.4" fill="#4b4"/><circle cx="20" cy="11" r="2.5" fill="#f9a818"/><path d="M31 6L17 31" stroke="#e8821e" stroke-width="2.6" stroke-linecap="round"/><path d="M29 8L31.5 3.5" stroke="#888" stroke-width="2.2"/><path d="M30 3L32 0L35.5 2.5L32 5Z" fill="#d8b078"/></svg>
<svg style="position:absolute;left:1640px;top:1051px" width="31" height="19"><rect x="1" y="1" width="29" height="17" fill="none" stroke="#fff" stroke-width="1.6" rx="1"/><g fill="#fff"><rect x="4" y="4" width="3" height="2.5"/><rect x="8.5" y="4" width="3" height="2.5"/><rect x="13" y="4" width="3" height="2.5"/><rect x="17.5" y="4" width="3" height="2.5"/><rect x="22" y="4" width="3" height="2.5"/><rect x="4" y="8" width="3" height="2.5"/><rect x="8.5" y="8" width="3" height="2.5"/><rect x="13" y="8" width="3" height="2.5"/><rect x="17.5" y="8" width="3" height="2.5"/><rect x="22" y="8" width="3" height="2.5"/><rect x="6" y="12" width="19" height="2.5"/></g></svg>
<svg style="position:absolute;left:1684px;top:1058px" width="9" height="6"><path d="M0 6L9 6L4.5 0Z" fill="#fff"/></svg>
<svg style="position:absolute;left:1704px;top:1052px" width="16" height="18"><path d="M1 1V17" stroke="#fff" stroke-width="1.5"/><path d="M2 2H10L8 5L13 5V9H2Z" fill="#fff"/><circle cx="11" cy="12.5" r="4" fill="#e33"/><path d="M9 10.5L13 14.5M13 10.5L9 14.5" stroke="#fff" stroke-width="1.2"/></svg>
<svg style="position:absolute;left:1729px;top:1052px" width="16" height="17"><path d="M2 1V5M5 1V5M1 5H6V9H1Z M3.5 9V16" stroke="#fff" stroke-width="1.4" fill="none"/><rect x="8" y="2" width="7" height="14" fill="none" stroke="#fff" stroke-width="1.6"/></svg>
<svg style="position:absolute;left:1753px;top:1054px" width="16" height="14"><path d="M1 13H3V11H1Z M4.5 13H6.5V9H4.5Z M8 13H10V6H8Z M11.5 13H13.5V3H11.5Z M15 13H16V1H15Z" fill="#fff"/></svg>
<svg style="position:absolute;left:1778px;top:1052px" width="14" height="16"><path d="M1 5H4L8 1V15L4 11H1Z" fill="#fff"/><path d="M10.5 5A4 4 0 0 1 10.5 11" stroke="#fff" stroke-width="1" fill="none"/></svg>
<div style="position:absolute;left:1800px;top:1045px;width:40px;text-align:center;font:11px 'Liberation Sans', sans-serif;color:#fff;line-height:16.5px">DEU<br>INTL</div>
<div style="position:absolute;left:1843px;top:1045px;width:60px;text-align:center;font:11px 'Liberation Sans', sans-serif;color:#fff;line-height:16.5px">12:03<br>17.01.2015</div>
</body></html>
